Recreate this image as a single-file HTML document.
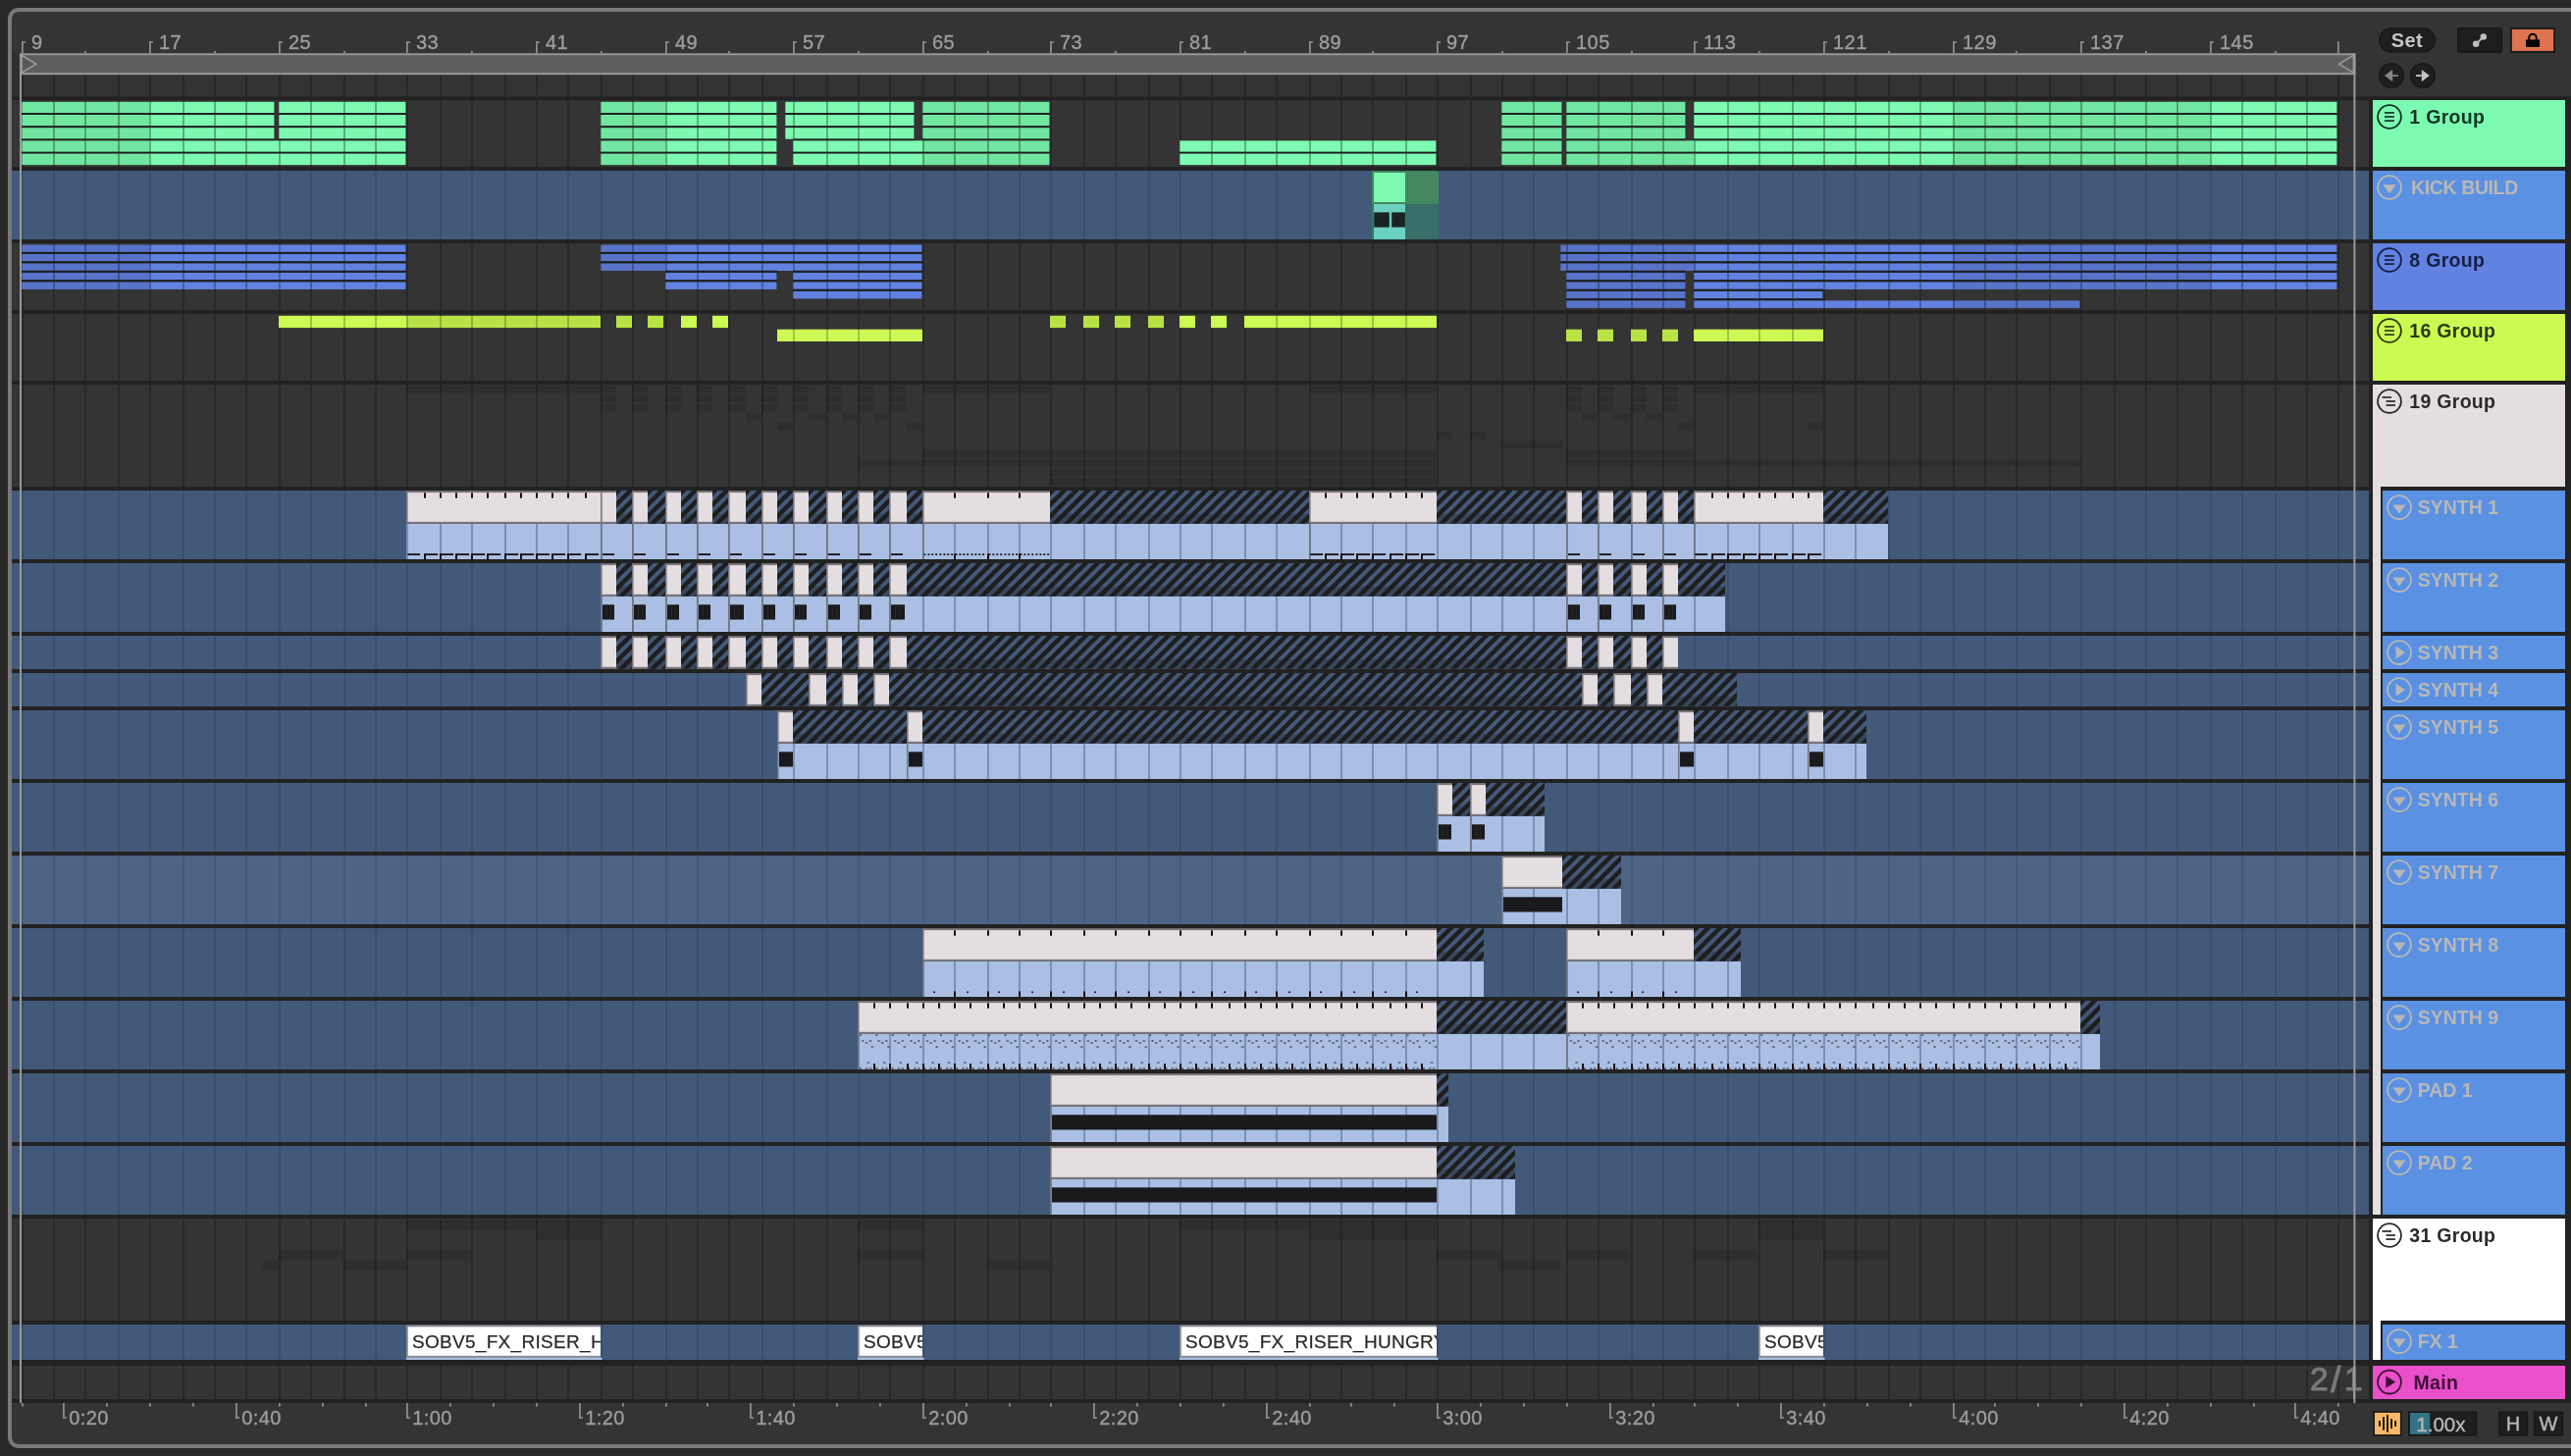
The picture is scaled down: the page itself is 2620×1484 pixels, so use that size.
<!DOCTYPE html><html><head><meta charset="utf-8"><title>Arrangement</title><style>

html,body{margin:0;padding:0;background:#282828;}
body{width:2620px;height:1484px;overflow:hidden;position:relative;font-family:"Liberation Sans",sans-serif;}
#panel{position:absolute;left:8px;top:8px;width:2640px;height:1468.1px;box-sizing:border-box;border:4.2px solid #797979;border-radius:11px;background:#343434;}
svg{position:absolute;left:0;top:0;}
#txt{position:absolute;left:0;top:0;width:2620px;height:1484px;will-change:transform;}
div.rl{position:absolute;font-size:20px;line-height:20px;color:#9d9d9d;white-space:nowrap;letter-spacing:0.45px;-webkit-text-stroke:0.35px #9d9d9d;}
div.th{position:absolute;font-size:19.5px;line-height:20px;font-weight:bold;white-space:nowrap;}
div.th{letter-spacing:0.3px;}
div.th.g{letter-spacing:0;}
div.th.k{letter-spacing:-0.38px;}
div.fx{position:absolute;height:30.7px;overflow:hidden;white-space:nowrap;font-size:19px;line-height:31.6px;color:#2b2b2b;box-sizing:border-box;padding-left:4.4px;letter-spacing:0.3px;-webkit-text-stroke:0.25px #2b2b2b;}
div.set{position:absolute;height:25.7px;line-height:27.3px;font-size:20px;font-weight:bold;color:#c6c6c6;text-align:center;letter-spacing:0.4px;}
div.bt{position:absolute;height:21px;line-height:21.5px;font-size:20px;color:#b8b8b8;text-align:center;box-sizing:border-box;-webkit-text-stroke:0.35px #b8b8b8;}
div.zoom{position:absolute;font-size:33.6px;line-height:34px;color:#787878;-webkit-text-stroke:1.05px #787878;white-space:nowrap;}

</style></head><body>
<div id="panel"></div>
<svg width="2620" height="1484" viewBox="0 0 2620 1484" shape-rendering="auto">
<defs>
<pattern id="g" patternUnits="userSpaceOnUse" x="0" y="0" width="2620" height="120"><rect x="22" y="0" width="2" height="120" fill="#000"/><rect x="54" y="0" width="2" height="120" fill="#000"/><rect x="86" y="0" width="2" height="120" fill="#000"/><rect x="120" y="0" width="2" height="120" fill="#000"/><rect x="152" y="0" width="2" height="120" fill="#000"/><rect x="186" y="0" width="2" height="120" fill="#000"/><rect x="218" y="0" width="2" height="120" fill="#000"/><rect x="250" y="0" width="2" height="120" fill="#000"/><rect x="284" y="0" width="2" height="120" fill="#000"/><rect x="316" y="0" width="2" height="120" fill="#000"/><rect x="350" y="0" width="2" height="120" fill="#000"/><rect x="382" y="0" width="2" height="120" fill="#000"/><rect x="414" y="0" width="2" height="120" fill="#000"/><rect x="448" y="0" width="2" height="120" fill="#000"/><rect x="480" y="0" width="2" height="120" fill="#000"/><rect x="514" y="0" width="2" height="120" fill="#000"/><rect x="546" y="0" width="2" height="120" fill="#000"/><rect x="578" y="0" width="2" height="120" fill="#000"/><rect x="612" y="0" width="2" height="120" fill="#000"/><rect x="644" y="0" width="2" height="120" fill="#000"/><rect x="678" y="0" width="2" height="120" fill="#000"/><rect x="710" y="0" width="2" height="120" fill="#000"/><rect x="742" y="0" width="2" height="120" fill="#000"/><rect x="776" y="0" width="2" height="120" fill="#000"/><rect x="808" y="0" width="2" height="120" fill="#000"/><rect x="842" y="0" width="2" height="120" fill="#000"/><rect x="874" y="0" width="2" height="120" fill="#000"/><rect x="906" y="0" width="2" height="120" fill="#000"/><rect x="940" y="0" width="2" height="120" fill="#000"/><rect x="972" y="0" width="2" height="120" fill="#000"/><rect x="1006" y="0" width="2" height="120" fill="#000"/><rect x="1038" y="0" width="2" height="120" fill="#000"/><rect x="1070" y="0" width="2" height="120" fill="#000"/><rect x="1104" y="0" width="2" height="120" fill="#000"/><rect x="1136" y="0" width="2" height="120" fill="#000"/><rect x="1170" y="0" width="2" height="120" fill="#000"/><rect x="1202" y="0" width="2" height="120" fill="#000"/><rect x="1234" y="0" width="2" height="120" fill="#000"/><rect x="1268" y="0" width="2" height="120" fill="#000"/><rect x="1300" y="0" width="2" height="120" fill="#000"/><rect x="1334" y="0" width="2" height="120" fill="#000"/><rect x="1366" y="0" width="2" height="120" fill="#000"/><rect x="1398" y="0" width="2" height="120" fill="#000"/><rect x="1432" y="0" width="2" height="120" fill="#000"/><rect x="1464" y="0" width="2" height="120" fill="#000"/><rect x="1498" y="0" width="2" height="120" fill="#000"/><rect x="1530" y="0" width="2" height="120" fill="#000"/><rect x="1562" y="0" width="2" height="120" fill="#000"/><rect x="1596" y="0" width="2" height="120" fill="#000"/><rect x="1628" y="0" width="2" height="120" fill="#000"/><rect x="1662" y="0" width="2" height="120" fill="#000"/><rect x="1694" y="0" width="2" height="120" fill="#000"/><rect x="1726" y="0" width="2" height="120" fill="#000"/><rect x="1760" y="0" width="2" height="120" fill="#000"/><rect x="1792" y="0" width="2" height="120" fill="#000"/><rect x="1826" y="0" width="2" height="120" fill="#000"/><rect x="1858" y="0" width="2" height="120" fill="#000"/><rect x="1890" y="0" width="2" height="120" fill="#000"/><rect x="1924" y="0" width="2" height="120" fill="#000"/><rect x="1956" y="0" width="2" height="120" fill="#000"/><rect x="1990" y="0" width="2" height="120" fill="#000"/><rect x="2022" y="0" width="2" height="120" fill="#000"/><rect x="2054" y="0" width="2" height="120" fill="#000"/><rect x="2088" y="0" width="2" height="120" fill="#000"/><rect x="2120" y="0" width="2" height="120" fill="#000"/><rect x="2154" y="0" width="2" height="120" fill="#000"/><rect x="2186" y="0" width="2" height="120" fill="#000"/><rect x="2218" y="0" width="2" height="120" fill="#000"/><rect x="2252" y="0" width="2" height="120" fill="#000"/><rect x="2284" y="0" width="2" height="120" fill="#000"/><rect x="2318" y="0" width="2" height="120" fill="#000"/><rect x="2350" y="0" width="2" height="120" fill="#000"/><rect x="2382" y="0" width="2" height="120" fill="#000"/></pattern>
<pattern id="gb" patternUnits="userSpaceOnUse" x="0" y="0" width="2620" height="120"><rect x="22" y="0" width="2" height="120" fill="#7b90b8"/><rect x="54" y="0" width="2" height="120" fill="#7b90b8"/><rect x="86" y="0" width="2" height="120" fill="#7b90b8"/><rect x="120" y="0" width="2" height="120" fill="#7b90b8"/><rect x="152" y="0" width="2" height="120" fill="#7b90b8"/><rect x="186" y="0" width="2" height="120" fill="#7b90b8"/><rect x="218" y="0" width="2" height="120" fill="#7b90b8"/><rect x="250" y="0" width="2" height="120" fill="#7b90b8"/><rect x="284" y="0" width="2" height="120" fill="#7b90b8"/><rect x="316" y="0" width="2" height="120" fill="#7b90b8"/><rect x="350" y="0" width="2" height="120" fill="#7b90b8"/><rect x="382" y="0" width="2" height="120" fill="#7b90b8"/><rect x="414" y="0" width="2" height="120" fill="#7b90b8"/><rect x="448" y="0" width="2" height="120" fill="#7b90b8"/><rect x="480" y="0" width="2" height="120" fill="#7b90b8"/><rect x="514" y="0" width="2" height="120" fill="#7b90b8"/><rect x="546" y="0" width="2" height="120" fill="#7b90b8"/><rect x="578" y="0" width="2" height="120" fill="#7b90b8"/><rect x="612" y="0" width="2" height="120" fill="#7b90b8"/><rect x="644" y="0" width="2" height="120" fill="#7b90b8"/><rect x="678" y="0" width="2" height="120" fill="#7b90b8"/><rect x="710" y="0" width="2" height="120" fill="#7b90b8"/><rect x="742" y="0" width="2" height="120" fill="#7b90b8"/><rect x="776" y="0" width="2" height="120" fill="#7b90b8"/><rect x="808" y="0" width="2" height="120" fill="#7b90b8"/><rect x="842" y="0" width="2" height="120" fill="#7b90b8"/><rect x="874" y="0" width="2" height="120" fill="#7b90b8"/><rect x="906" y="0" width="2" height="120" fill="#7b90b8"/><rect x="940" y="0" width="2" height="120" fill="#7b90b8"/><rect x="972" y="0" width="2" height="120" fill="#7b90b8"/><rect x="1006" y="0" width="2" height="120" fill="#7b90b8"/><rect x="1038" y="0" width="2" height="120" fill="#7b90b8"/><rect x="1070" y="0" width="2" height="120" fill="#7b90b8"/><rect x="1104" y="0" width="2" height="120" fill="#7b90b8"/><rect x="1136" y="0" width="2" height="120" fill="#7b90b8"/><rect x="1170" y="0" width="2" height="120" fill="#7b90b8"/><rect x="1202" y="0" width="2" height="120" fill="#7b90b8"/><rect x="1234" y="0" width="2" height="120" fill="#7b90b8"/><rect x="1268" y="0" width="2" height="120" fill="#7b90b8"/><rect x="1300" y="0" width="2" height="120" fill="#7b90b8"/><rect x="1334" y="0" width="2" height="120" fill="#7b90b8"/><rect x="1366" y="0" width="2" height="120" fill="#7b90b8"/><rect x="1398" y="0" width="2" height="120" fill="#7b90b8"/><rect x="1432" y="0" width="2" height="120" fill="#7b90b8"/><rect x="1464" y="0" width="2" height="120" fill="#7b90b8"/><rect x="1498" y="0" width="2" height="120" fill="#7b90b8"/><rect x="1530" y="0" width="2" height="120" fill="#7b90b8"/><rect x="1562" y="0" width="2" height="120" fill="#7b90b8"/><rect x="1596" y="0" width="2" height="120" fill="#7b90b8"/><rect x="1628" y="0" width="2" height="120" fill="#7b90b8"/><rect x="1662" y="0" width="2" height="120" fill="#7b90b8"/><rect x="1694" y="0" width="2" height="120" fill="#7b90b8"/><rect x="1726" y="0" width="2" height="120" fill="#7b90b8"/><rect x="1760" y="0" width="2" height="120" fill="#7b90b8"/><rect x="1792" y="0" width="2" height="120" fill="#7b90b8"/><rect x="1826" y="0" width="2" height="120" fill="#7b90b8"/><rect x="1858" y="0" width="2" height="120" fill="#7b90b8"/><rect x="1890" y="0" width="2" height="120" fill="#7b90b8"/><rect x="1924" y="0" width="2" height="120" fill="#7b90b8"/><rect x="1956" y="0" width="2" height="120" fill="#7b90b8"/><rect x="1990" y="0" width="2" height="120" fill="#7b90b8"/><rect x="2022" y="0" width="2" height="120" fill="#7b90b8"/><rect x="2054" y="0" width="2" height="120" fill="#7b90b8"/><rect x="2088" y="0" width="2" height="120" fill="#7b90b8"/><rect x="2120" y="0" width="2" height="120" fill="#7b90b8"/><rect x="2154" y="0" width="2" height="120" fill="#7b90b8"/><rect x="2186" y="0" width="2" height="120" fill="#7b90b8"/><rect x="2218" y="0" width="2" height="120" fill="#7b90b8"/><rect x="2252" y="0" width="2" height="120" fill="#7b90b8"/><rect x="2284" y="0" width="2" height="120" fill="#7b90b8"/><rect x="2318" y="0" width="2" height="120" fill="#7b90b8"/><rect x="2350" y="0" width="2" height="120" fill="#7b90b8"/><rect x="2382" y="0" width="2" height="120" fill="#7b90b8"/></pattern>
<pattern id="h" patternUnits="userSpaceOnUse" x="0" y="0" width="12" height="12"><rect width="12" height="12" fill="#1e1e1e"/><path d="M-0.5 -3L-18.5 15M11.5 -3L-6.5 15M23.5 -3L5.5 15" stroke="#44597a" stroke-width="4.05" fill="none"/></pattern>
<pattern id="sp" patternUnits="userSpaceOnUse" x="22.2" y="1054" width="16.4" height="74"><rect x="0.9" y="0.1" width="2" height="2" fill="#59616f"/><rect x="3.3" y="6" width="2" height="2" fill="#59616f"/><rect x="11" y="6" width="2" height="2" fill="#59616f"/><rect x="7" y="8" width="2" height="2" fill="#59616f"/><rect x="13" y="12" width="2" height="2" fill="#59616f"/><rect x="9" y="28" width="2" height="2" fill="#59616f"/><rect x="0.9" y="34" width="2" height="2" fill="#59616f"/><rect x="7.1" y="34" width="2" height="2" fill="#59616f"/><rect x="11.1" y="34" width="2" height="2" fill="#59616f"/></pattern>
</defs>
<rect x="12" y="98.3" width="2402" height="1331.7" fill="#222222"/>
<rect x="2414" y="98.3" width="206" height="1331.7" fill="#222222"/>
<rect x="12" y="54.3" width="8" height="44" fill="#2f2f2f"/>
<rect x="20" y="76" width="2394" height="22.3" fill="#333333"/>
<rect x="22" y="76" width="2370" height="22.3" fill="url(#g)" opacity="0.23"/>
<rect x="12" y="102" width="2402" height="68" fill="#343434"/>
<rect x="22" y="102" width="2370" height="68" fill="url(#g)" opacity="0.23"/>
<rect x="12" y="174" width="2402" height="70" fill="#43597a"/>
<rect x="22" y="174" width="2370" height="70" fill="url(#g)" opacity="0.115"/>
<rect x="12" y="248" width="2402" height="68" fill="#343434"/>
<rect x="22" y="248" width="2370" height="68" fill="url(#g)" opacity="0.23"/>
<rect x="12" y="320" width="2402" height="68" fill="#343434"/>
<rect x="22" y="320" width="2370" height="68" fill="url(#g)" opacity="0.23"/>
<rect x="12" y="392" width="2402" height="104" fill="#343434"/>
<rect x="22" y="392" width="2370" height="104" fill="url(#g)" opacity="0.23"/>
<rect x="12" y="500" width="2402" height="70" fill="#43597a"/>
<rect x="22" y="500" width="2370" height="70" fill="url(#g)" opacity="0.115"/>
<rect x="12" y="574" width="2402" height="70" fill="#43597a"/>
<rect x="22" y="574" width="2370" height="70" fill="url(#g)" opacity="0.115"/>
<rect x="12" y="648" width="2402" height="34" fill="#43597a"/>
<rect x="22" y="648" width="2370" height="34" fill="url(#g)" opacity="0.115"/>
<rect x="12" y="686" width="2402" height="34" fill="#43597a"/>
<rect x="22" y="686" width="2370" height="34" fill="url(#g)" opacity="0.115"/>
<rect x="12" y="724" width="2402" height="70" fill="#43597a"/>
<rect x="22" y="724" width="2370" height="70" fill="url(#g)" opacity="0.115"/>
<rect x="12" y="798" width="2402" height="70" fill="#43597a"/>
<rect x="22" y="798" width="2370" height="70" fill="url(#g)" opacity="0.115"/>
<rect x="12" y="872" width="2402" height="70" fill="#4e6485"/>
<rect x="22" y="872" width="2370" height="70" fill="url(#g)" opacity="0.115"/>
<rect x="12" y="946" width="2402" height="70" fill="#43597a"/>
<rect x="22" y="946" width="2370" height="70" fill="url(#g)" opacity="0.115"/>
<rect x="12" y="1020" width="2402" height="70" fill="#43597a"/>
<rect x="22" y="1020" width="2370" height="70" fill="url(#g)" opacity="0.115"/>
<rect x="12" y="1094" width="2402" height="70" fill="#43597a"/>
<rect x="22" y="1094" width="2370" height="70" fill="url(#g)" opacity="0.115"/>
<rect x="12" y="1168" width="2402" height="70" fill="#43597a"/>
<rect x="22" y="1168" width="2370" height="70" fill="url(#g)" opacity="0.115"/>
<rect x="12" y="1242" width="2402" height="104" fill="#343434"/>
<rect x="22" y="1242" width="2370" height="104" fill="url(#g)" opacity="0.23"/>
<rect x="12" y="1350" width="2402" height="36" fill="#43597a"/>
<rect x="22" y="1350" width="2370" height="36" fill="url(#g)" opacity="0.115"/>
<rect x="12" y="1392" width="2402" height="34" fill="#343434"/>
<rect x="22" y="1392" width="2370" height="34" fill="url(#g)" opacity="0.23"/>
<rect x="22.3" y="115" width="129.7" height="2.2" fill="#1d1f1e"/>
<rect x="22.3" y="103.8" width="129.7" height="11.5" fill="#71e5a2"/>
<rect x="152" y="115" width="127.4" height="2.2" fill="#1d1f1e"/>
<rect x="152" y="103.8" width="127.4" height="11.5" fill="#7dfab2"/>
<rect x="24" y="103.8" width="256" height="11.5" fill="url(#g)" opacity="0.3"/>
<rect x="22.3" y="128.2" width="129.7" height="2.2" fill="#1d1f1e"/>
<rect x="22.3" y="115.1" width="129.7" height="2.1" fill="#1d1f1e"/>
<rect x="22.3" y="117" width="129.7" height="11.5" fill="#71e5a2"/>
<rect x="152" y="128.2" width="127.4" height="2.2" fill="#1d1f1e"/>
<rect x="152" y="115.1" width="127.4" height="2.1" fill="#1d1f1e"/>
<rect x="152" y="117" width="127.4" height="11.5" fill="#7dfab2"/>
<rect x="24" y="117" width="256" height="11.5" fill="url(#g)" opacity="0.3"/>
<rect x="22.3" y="141.4" width="129.7" height="2.2" fill="#1d1f1e"/>
<rect x="22.3" y="128.3" width="129.7" height="2.1" fill="#1d1f1e"/>
<rect x="22.3" y="130.2" width="129.7" height="11.5" fill="#71e5a2"/>
<rect x="152" y="141.4" width="127.4" height="2.2" fill="#1d1f1e"/>
<rect x="152" y="128.3" width="127.4" height="2.1" fill="#1d1f1e"/>
<rect x="152" y="130.2" width="127.4" height="11.5" fill="#7dfab2"/>
<rect x="24" y="130.2" width="256" height="11.5" fill="url(#g)" opacity="0.3"/>
<rect x="284.3" y="115" width="129.1" height="2.2" fill="#1d1f1e"/>
<rect x="284.3" y="103.8" width="129.1" height="11.5" fill="#7dfab2"/>
<rect x="286" y="103.8" width="128" height="11.5" fill="url(#g)" opacity="0.3"/>
<rect x="284.3" y="128.2" width="129.1" height="2.2" fill="#1d1f1e"/>
<rect x="284.3" y="115.1" width="129.1" height="2.1" fill="#1d1f1e"/>
<rect x="284.3" y="117" width="129.1" height="11.5" fill="#7dfab2"/>
<rect x="286" y="117" width="128" height="11.5" fill="url(#g)" opacity="0.3"/>
<rect x="284.3" y="141.4" width="129.1" height="2.2" fill="#1d1f1e"/>
<rect x="284.3" y="128.3" width="129.1" height="2.1" fill="#1d1f1e"/>
<rect x="284.3" y="130.2" width="129.1" height="11.5" fill="#7dfab2"/>
<rect x="286" y="130.2" width="128" height="11.5" fill="url(#g)" opacity="0.3"/>
<rect x="22.3" y="154.6" width="129.7" height="2.2" fill="#1d1f1e"/>
<rect x="22.3" y="141.5" width="129.7" height="2.1" fill="#1d1f1e"/>
<rect x="22.3" y="143.4" width="129.7" height="11.5" fill="#71e5a2"/>
<rect x="152" y="154.6" width="261.4" height="2.2" fill="#1d1f1e"/>
<rect x="152" y="141.5" width="128" height="2.1" fill="#1d1f1e"/>
<rect x="284" y="141.5" width="129.4" height="2.1" fill="#1d1f1e"/>
<rect x="152" y="143.4" width="261.4" height="11.5" fill="#7dfab2"/>
<rect x="24" y="143.4" width="390" height="11.5" fill="url(#g)" opacity="0.3"/>
<rect x="22.3" y="154.7" width="129.7" height="2.1" fill="#1d1f1e"/>
<rect x="22.3" y="156.6" width="129.7" height="11.5" fill="#71e5a2"/>
<rect x="152" y="154.7" width="261.4" height="2.1" fill="#1d1f1e"/>
<rect x="152" y="156.6" width="261.4" height="11.5" fill="#7dfab2"/>
<rect x="24" y="156.6" width="390" height="11.5" fill="url(#g)" opacity="0.3"/>
<rect x="612.3" y="115" width="65.7" height="2.2" fill="#1d1f1e"/>
<rect x="612.3" y="103.8" width="65.7" height="11.5" fill="#71e5a2"/>
<rect x="678" y="115" width="113.4" height="2.2" fill="#1d1f1e"/>
<rect x="678" y="103.8" width="113.4" height="11.5" fill="#7dfab2"/>
<rect x="614" y="103.8" width="178" height="11.5" fill="url(#g)" opacity="0.3"/>
<rect x="612.3" y="128.2" width="65.7" height="2.2" fill="#1d1f1e"/>
<rect x="612.3" y="115.1" width="65.7" height="2.1" fill="#1d1f1e"/>
<rect x="612.3" y="117" width="65.7" height="11.5" fill="#71e5a2"/>
<rect x="678" y="128.2" width="113.4" height="2.2" fill="#1d1f1e"/>
<rect x="678" y="115.1" width="113.4" height="2.1" fill="#1d1f1e"/>
<rect x="678" y="117" width="113.4" height="11.5" fill="#7dfab2"/>
<rect x="614" y="117" width="178" height="11.5" fill="url(#g)" opacity="0.3"/>
<rect x="612.3" y="141.4" width="65.7" height="2.2" fill="#1d1f1e"/>
<rect x="612.3" y="128.3" width="65.7" height="2.1" fill="#1d1f1e"/>
<rect x="612.3" y="130.2" width="65.7" height="11.5" fill="#71e5a2"/>
<rect x="678" y="141.4" width="113.4" height="2.2" fill="#1d1f1e"/>
<rect x="678" y="128.3" width="113.4" height="2.1" fill="#1d1f1e"/>
<rect x="678" y="130.2" width="113.4" height="11.5" fill="#7dfab2"/>
<rect x="614" y="130.2" width="178" height="11.5" fill="url(#g)" opacity="0.3"/>
<rect x="612.3" y="154.6" width="65.7" height="2.2" fill="#1d1f1e"/>
<rect x="612.3" y="141.5" width="65.7" height="2.1" fill="#1d1f1e"/>
<rect x="612.3" y="143.4" width="65.7" height="11.5" fill="#71e5a2"/>
<rect x="678" y="154.6" width="113.4" height="2.2" fill="#1d1f1e"/>
<rect x="678" y="141.5" width="113.4" height="2.1" fill="#1d1f1e"/>
<rect x="678" y="143.4" width="113.4" height="11.5" fill="#7dfab2"/>
<rect x="614" y="143.4" width="178" height="11.5" fill="url(#g)" opacity="0.3"/>
<rect x="612.3" y="154.7" width="65.7" height="2.1" fill="#1d1f1e"/>
<rect x="612.3" y="156.6" width="65.7" height="11.5" fill="#71e5a2"/>
<rect x="678" y="154.7" width="113.4" height="2.1" fill="#1d1f1e"/>
<rect x="678" y="156.6" width="113.4" height="11.5" fill="#7dfab2"/>
<rect x="614" y="156.6" width="178" height="11.5" fill="url(#g)" opacity="0.3"/>
<rect x="800.3" y="115" width="131.1" height="2.2" fill="#1d1f1e"/>
<rect x="800.3" y="103.8" width="131.1" height="11.5" fill="#7dfab2"/>
<rect x="804" y="103.8" width="128" height="11.5" fill="url(#g)" opacity="0.3"/>
<rect x="800.3" y="128.2" width="131.1" height="2.2" fill="#1d1f1e"/>
<rect x="800.3" y="115.1" width="131.1" height="2.1" fill="#1d1f1e"/>
<rect x="800.3" y="117" width="131.1" height="11.5" fill="#7dfab2"/>
<rect x="804" y="117" width="128" height="11.5" fill="url(#g)" opacity="0.3"/>
<rect x="808" y="141.4" width="123.4" height="2.2" fill="#1d1f1e"/>
<rect x="800.3" y="128.3" width="131.1" height="2.1" fill="#1d1f1e"/>
<rect x="800.3" y="130.2" width="131.1" height="11.5" fill="#7dfab2"/>
<rect x="804" y="130.2" width="128" height="11.5" fill="url(#g)" opacity="0.3"/>
<rect x="940.3" y="115" width="129.1" height="2.2" fill="#1d1f1e"/>
<rect x="940.3" y="103.8" width="129.1" height="11.5" fill="#71e5a2"/>
<rect x="942" y="103.8" width="128" height="11.5" fill="url(#g)" opacity="0.3"/>
<rect x="940.3" y="128.2" width="129.1" height="2.2" fill="#1d1f1e"/>
<rect x="940.3" y="115.1" width="129.1" height="2.1" fill="#1d1f1e"/>
<rect x="940.3" y="117" width="129.1" height="11.5" fill="#71e5a2"/>
<rect x="942" y="117" width="128" height="11.5" fill="url(#g)" opacity="0.3"/>
<rect x="940.3" y="141.4" width="129.1" height="2.2" fill="#1d1f1e"/>
<rect x="940.3" y="128.3" width="129.1" height="2.1" fill="#1d1f1e"/>
<rect x="940.3" y="130.2" width="129.1" height="11.5" fill="#71e5a2"/>
<rect x="942" y="130.2" width="128" height="11.5" fill="url(#g)" opacity="0.3"/>
<rect x="808.3" y="154.6" width="131.7" height="2.2" fill="#1d1f1e"/>
<rect x="808.3" y="141.5" width="123.7" height="2.1" fill="#1d1f1e"/>
<rect x="808.3" y="143.4" width="131.7" height="11.5" fill="#7dfab2"/>
<rect x="940" y="154.6" width="129.4" height="2.2" fill="#1d1f1e"/>
<rect x="940" y="141.5" width="129.4" height="2.1" fill="#1d1f1e"/>
<rect x="940" y="143.4" width="129.4" height="11.5" fill="#71e5a2"/>
<rect x="812" y="143.4" width="258" height="11.5" fill="url(#g)" opacity="0.3"/>
<rect x="808.3" y="154.7" width="131.7" height="2.1" fill="#1d1f1e"/>
<rect x="808.3" y="156.6" width="131.7" height="11.5" fill="#7dfab2"/>
<rect x="940" y="154.7" width="129.4" height="2.1" fill="#1d1f1e"/>
<rect x="940" y="156.6" width="129.4" height="11.5" fill="#71e5a2"/>
<rect x="812" y="156.6" width="258" height="11.5" fill="url(#g)" opacity="0.3"/>
<rect x="1202.3" y="154.6" width="261.1" height="2.2" fill="#1d1f1e"/>
<rect x="1202.3" y="143.4" width="261.1" height="11.5" fill="#7dfab2"/>
<rect x="1206" y="143.4" width="258" height="11.5" fill="url(#g)" opacity="0.3"/>
<rect x="1202.3" y="154.7" width="261.1" height="2.1" fill="#1d1f1e"/>
<rect x="1202.3" y="156.6" width="261.1" height="11.5" fill="#7dfab2"/>
<rect x="1206" y="156.6" width="258" height="11.5" fill="url(#g)" opacity="0.3"/>
<rect x="1530.3" y="115" width="61.1" height="2.2" fill="#1d1f1e"/>
<rect x="1530.3" y="103.8" width="61.1" height="11.5" fill="#71e5a2"/>
<rect x="1534" y="103.8" width="58" height="11.5" fill="url(#g)" opacity="0.3"/>
<rect x="1530.3" y="128.2" width="61.1" height="2.2" fill="#1d1f1e"/>
<rect x="1530.3" y="115.1" width="61.1" height="2.1" fill="#1d1f1e"/>
<rect x="1530.3" y="117" width="61.1" height="11.5" fill="#71e5a2"/>
<rect x="1534" y="117" width="58" height="11.5" fill="url(#g)" opacity="0.3"/>
<rect x="1530.3" y="141.4" width="61.1" height="2.2" fill="#1d1f1e"/>
<rect x="1530.3" y="128.3" width="61.1" height="2.1" fill="#1d1f1e"/>
<rect x="1530.3" y="130.2" width="61.1" height="11.5" fill="#71e5a2"/>
<rect x="1534" y="130.2" width="58" height="11.5" fill="url(#g)" opacity="0.3"/>
<rect x="1530.3" y="154.6" width="61.1" height="2.2" fill="#1d1f1e"/>
<rect x="1530.3" y="141.5" width="61.1" height="2.1" fill="#1d1f1e"/>
<rect x="1530.3" y="143.4" width="61.1" height="11.5" fill="#71e5a2"/>
<rect x="1534" y="143.4" width="58" height="11.5" fill="url(#g)" opacity="0.3"/>
<rect x="1530.3" y="154.7" width="61.1" height="2.1" fill="#1d1f1e"/>
<rect x="1530.3" y="156.6" width="61.1" height="11.5" fill="#71e5a2"/>
<rect x="1534" y="156.6" width="58" height="11.5" fill="url(#g)" opacity="0.3"/>
<rect x="1596.3" y="115" width="121.1" height="2.2" fill="#1d1f1e"/>
<rect x="1596.3" y="103.8" width="121.1" height="11.5" fill="#71e5a2"/>
<rect x="1598" y="103.8" width="120" height="11.5" fill="url(#g)" opacity="0.3"/>
<rect x="1596.3" y="128.2" width="121.1" height="2.2" fill="#1d1f1e"/>
<rect x="1596.3" y="115.1" width="121.1" height="2.1" fill="#1d1f1e"/>
<rect x="1596.3" y="117" width="121.1" height="11.5" fill="#71e5a2"/>
<rect x="1598" y="117" width="120" height="11.5" fill="url(#g)" opacity="0.3"/>
<rect x="1596.3" y="141.4" width="121.1" height="2.2" fill="#1d1f1e"/>
<rect x="1596.3" y="128.3" width="121.1" height="2.1" fill="#1d1f1e"/>
<rect x="1596.3" y="130.2" width="121.1" height="11.5" fill="#71e5a2"/>
<rect x="1598" y="130.2" width="120" height="11.5" fill="url(#g)" opacity="0.3"/>
<rect x="1726.3" y="115" width="263.7" height="2.2" fill="#1d1f1e"/>
<rect x="1726.3" y="103.8" width="263.7" height="11.5" fill="#7dfab2"/>
<rect x="1990" y="115" width="262" height="2.2" fill="#1d1f1e"/>
<rect x="1990" y="103.8" width="262" height="11.5" fill="#71e5a2"/>
<rect x="2252" y="115" width="129.4" height="2.2" fill="#1d1f1e"/>
<rect x="2252" y="103.8" width="129.4" height="11.5" fill="#7dfab2"/>
<rect x="1730" y="103.8" width="652" height="11.5" fill="url(#g)" opacity="0.3"/>
<rect x="1726.3" y="128.2" width="263.7" height="2.2" fill="#1d1f1e"/>
<rect x="1726.3" y="115.1" width="263.7" height="2.1" fill="#1d1f1e"/>
<rect x="1726.3" y="117" width="263.7" height="11.5" fill="#7dfab2"/>
<rect x="1990" y="128.2" width="262" height="2.2" fill="#1d1f1e"/>
<rect x="1990" y="115.1" width="262" height="2.1" fill="#1d1f1e"/>
<rect x="1990" y="117" width="262" height="11.5" fill="#71e5a2"/>
<rect x="2252" y="128.2" width="129.4" height="2.2" fill="#1d1f1e"/>
<rect x="2252" y="115.1" width="129.4" height="2.1" fill="#1d1f1e"/>
<rect x="2252" y="117" width="129.4" height="11.5" fill="#7dfab2"/>
<rect x="1730" y="117" width="652" height="11.5" fill="url(#g)" opacity="0.3"/>
<rect x="1726.3" y="141.4" width="263.7" height="2.2" fill="#1d1f1e"/>
<rect x="1726.3" y="128.3" width="263.7" height="2.1" fill="#1d1f1e"/>
<rect x="1726.3" y="130.2" width="263.7" height="11.5" fill="#7dfab2"/>
<rect x="1990" y="141.4" width="262" height="2.2" fill="#1d1f1e"/>
<rect x="1990" y="128.3" width="262" height="2.1" fill="#1d1f1e"/>
<rect x="1990" y="130.2" width="262" height="11.5" fill="#71e5a2"/>
<rect x="2252" y="141.4" width="129.4" height="2.2" fill="#1d1f1e"/>
<rect x="2252" y="128.3" width="129.4" height="2.1" fill="#1d1f1e"/>
<rect x="2252" y="130.2" width="129.4" height="11.5" fill="#7dfab2"/>
<rect x="1730" y="130.2" width="652" height="11.5" fill="url(#g)" opacity="0.3"/>
<rect x="1596.3" y="154.6" width="129.7" height="2.2" fill="#1d1f1e"/>
<rect x="1596.3" y="141.5" width="121.7" height="2.1" fill="#1d1f1e"/>
<rect x="1596.3" y="143.4" width="129.7" height="11.5" fill="#71e5a2"/>
<rect x="1726" y="154.6" width="264" height="2.2" fill="#1d1f1e"/>
<rect x="1726" y="141.5" width="264" height="2.1" fill="#1d1f1e"/>
<rect x="1726" y="143.4" width="264" height="11.5" fill="#7dfab2"/>
<rect x="1990" y="154.6" width="262" height="2.2" fill="#1d1f1e"/>
<rect x="1990" y="141.5" width="262" height="2.1" fill="#1d1f1e"/>
<rect x="1990" y="143.4" width="262" height="11.5" fill="#71e5a2"/>
<rect x="2252" y="154.6" width="129.4" height="2.2" fill="#1d1f1e"/>
<rect x="2252" y="141.5" width="129.4" height="2.1" fill="#1d1f1e"/>
<rect x="2252" y="143.4" width="129.4" height="11.5" fill="#7dfab2"/>
<rect x="1598" y="143.4" width="784" height="11.5" fill="url(#g)" opacity="0.3"/>
<rect x="1596.3" y="154.7" width="129.7" height="2.1" fill="#1d1f1e"/>
<rect x="1596.3" y="156.6" width="129.7" height="11.5" fill="#71e5a2"/>
<rect x="1726" y="154.7" width="264" height="2.1" fill="#1d1f1e"/>
<rect x="1726" y="156.6" width="264" height="11.5" fill="#7dfab2"/>
<rect x="1990" y="154.7" width="262" height="2.1" fill="#1d1f1e"/>
<rect x="1990" y="156.6" width="262" height="11.5" fill="#71e5a2"/>
<rect x="2252" y="154.7" width="129.4" height="2.1" fill="#1d1f1e"/>
<rect x="2252" y="156.6" width="129.4" height="11.5" fill="#7dfab2"/>
<rect x="1598" y="156.6" width="784" height="11.5" fill="url(#g)" opacity="0.3"/>
<rect x="22.3" y="256.7" width="129.7" height="2.48" fill="#1d1f1e"/>
<rect x="22.3" y="249.5" width="129.7" height="7.5" fill="#5873c9"/>
<rect x="152" y="256.7" width="261.4" height="2.48" fill="#1d1f1e"/>
<rect x="152" y="249.5" width="261.4" height="7.5" fill="#6182e1"/>
<rect x="24" y="249.5" width="390" height="7.5" fill="url(#g)" opacity="0.28"/>
<rect x="22.3" y="266.18" width="129.7" height="2.48" fill="#1d1f1e"/>
<rect x="22.3" y="256.8" width="129.7" height="2.38" fill="#1d1f1e"/>
<rect x="22.3" y="258.98" width="129.7" height="7.5" fill="#5873c9"/>
<rect x="152" y="266.18" width="261.4" height="2.48" fill="#1d1f1e"/>
<rect x="152" y="256.8" width="261.4" height="2.38" fill="#1d1f1e"/>
<rect x="152" y="258.98" width="261.4" height="7.5" fill="#6182e1"/>
<rect x="24" y="258.98" width="390" height="7.5" fill="url(#g)" opacity="0.28"/>
<rect x="22.3" y="275.66" width="129.7" height="2.48" fill="#1d1f1e"/>
<rect x="22.3" y="266.28" width="129.7" height="2.38" fill="#1d1f1e"/>
<rect x="22.3" y="268.46" width="129.7" height="7.5" fill="#5873c9"/>
<rect x="152" y="275.66" width="261.4" height="2.48" fill="#1d1f1e"/>
<rect x="152" y="266.28" width="261.4" height="2.38" fill="#1d1f1e"/>
<rect x="152" y="268.46" width="261.4" height="7.5" fill="#6182e1"/>
<rect x="24" y="268.46" width="390" height="7.5" fill="url(#g)" opacity="0.28"/>
<rect x="22.3" y="285.14" width="129.7" height="2.48" fill="#1d1f1e"/>
<rect x="22.3" y="275.76" width="129.7" height="2.38" fill="#1d1f1e"/>
<rect x="22.3" y="277.94" width="129.7" height="7.5" fill="#5873c9"/>
<rect x="152" y="285.14" width="261.4" height="2.48" fill="#1d1f1e"/>
<rect x="152" y="275.76" width="261.4" height="2.38" fill="#1d1f1e"/>
<rect x="152" y="277.94" width="261.4" height="7.5" fill="#6182e1"/>
<rect x="24" y="277.94" width="390" height="7.5" fill="url(#g)" opacity="0.28"/>
<rect x="22.3" y="285.24" width="129.7" height="2.38" fill="#1d1f1e"/>
<rect x="22.3" y="287.42" width="129.7" height="7.5" fill="#5873c9"/>
<rect x="152" y="285.24" width="261.4" height="2.38" fill="#1d1f1e"/>
<rect x="152" y="287.42" width="261.4" height="7.5" fill="#6182e1"/>
<rect x="24" y="287.42" width="390" height="7.5" fill="url(#g)" opacity="0.28"/>
<rect x="612.3" y="256.7" width="65.7" height="2.48" fill="#1d1f1e"/>
<rect x="612.3" y="249.5" width="65.7" height="7.5" fill="#5873c9"/>
<rect x="678" y="256.7" width="261.4" height="2.48" fill="#1d1f1e"/>
<rect x="678" y="249.5" width="261.4" height="7.5" fill="#6182e1"/>
<rect x="614" y="249.5" width="326" height="7.5" fill="url(#g)" opacity="0.28"/>
<rect x="612.3" y="266.18" width="65.7" height="2.48" fill="#1d1f1e"/>
<rect x="612.3" y="256.8" width="65.7" height="2.38" fill="#1d1f1e"/>
<rect x="612.3" y="258.98" width="65.7" height="7.5" fill="#5873c9"/>
<rect x="678" y="266.18" width="261.4" height="2.48" fill="#1d1f1e"/>
<rect x="678" y="256.8" width="261.4" height="2.38" fill="#1d1f1e"/>
<rect x="678" y="258.98" width="261.4" height="7.5" fill="#6182e1"/>
<rect x="614" y="258.98" width="326" height="7.5" fill="url(#g)" opacity="0.28"/>
<rect x="612.3" y="266.28" width="65.7" height="2.38" fill="#1d1f1e"/>
<rect x="612.3" y="268.46" width="65.7" height="7.5" fill="#5873c9"/>
<rect x="678" y="275.66" width="114" height="2.48" fill="#1d1f1e"/>
<rect x="808" y="275.66" width="131.4" height="2.48" fill="#1d1f1e"/>
<rect x="678" y="266.28" width="261.4" height="2.38" fill="#1d1f1e"/>
<rect x="678" y="268.46" width="261.4" height="7.5" fill="#6182e1"/>
<rect x="614" y="268.46" width="326" height="7.5" fill="url(#g)" opacity="0.28"/>
<rect x="678.3" y="285.14" width="113.1" height="2.48" fill="#1d1f1e"/>
<rect x="678.3" y="275.76" width="113.1" height="2.38" fill="#1d1f1e"/>
<rect x="678.3" y="277.94" width="113.1" height="7.5" fill="#6182e1"/>
<rect x="680" y="277.94" width="112" height="7.5" fill="url(#g)" opacity="0.28"/>
<rect x="678.3" y="285.24" width="113.1" height="2.38" fill="#1d1f1e"/>
<rect x="678.3" y="287.42" width="113.1" height="7.5" fill="#6182e1"/>
<rect x="680" y="287.42" width="112" height="7.5" fill="url(#g)" opacity="0.28"/>
<rect x="808.3" y="285.14" width="131.1" height="2.48" fill="#1d1f1e"/>
<rect x="808.3" y="275.76" width="131.1" height="2.38" fill="#1d1f1e"/>
<rect x="808.3" y="277.94" width="131.1" height="7.5" fill="#6182e1"/>
<rect x="812" y="277.94" width="128" height="7.5" fill="url(#g)" opacity="0.28"/>
<rect x="808.3" y="294.62" width="131.1" height="2.48" fill="#1d1f1e"/>
<rect x="808.3" y="285.24" width="131.1" height="2.38" fill="#1d1f1e"/>
<rect x="808.3" y="287.42" width="131.1" height="7.5" fill="#6182e1"/>
<rect x="812" y="287.42" width="128" height="7.5" fill="url(#g)" opacity="0.28"/>
<rect x="808.3" y="294.72" width="131.1" height="2.38" fill="#1d1f1e"/>
<rect x="808.3" y="296.9" width="131.1" height="7.5" fill="#6182e1"/>
<rect x="812" y="296.9" width="128" height="7.5" fill="url(#g)" opacity="0.28"/>
<rect x="1590.3" y="256.7" width="135.7" height="2.48" fill="#1d1f1e"/>
<rect x="1590.3" y="249.5" width="135.7" height="7.5" fill="#5873c9"/>
<rect x="1726" y="256.7" width="264" height="2.48" fill="#1d1f1e"/>
<rect x="1726" y="249.5" width="264" height="7.5" fill="#6182e1"/>
<rect x="1990" y="256.7" width="262" height="2.48" fill="#1d1f1e"/>
<rect x="1990" y="249.5" width="262" height="7.5" fill="#5873c9"/>
<rect x="2252" y="256.7" width="129.4" height="2.48" fill="#1d1f1e"/>
<rect x="2252" y="249.5" width="129.4" height="7.5" fill="#6182e1"/>
<rect x="1594" y="249.5" width="788" height="7.5" fill="url(#g)" opacity="0.28"/>
<rect x="1590.3" y="266.18" width="135.7" height="2.48" fill="#1d1f1e"/>
<rect x="1590.3" y="256.8" width="135.7" height="2.38" fill="#1d1f1e"/>
<rect x="1590.3" y="258.98" width="135.7" height="7.5" fill="#5873c9"/>
<rect x="1726" y="266.18" width="264" height="2.48" fill="#1d1f1e"/>
<rect x="1726" y="256.8" width="264" height="2.38" fill="#1d1f1e"/>
<rect x="1726" y="258.98" width="264" height="7.5" fill="#6182e1"/>
<rect x="1990" y="266.18" width="262" height="2.48" fill="#1d1f1e"/>
<rect x="1990" y="256.8" width="262" height="2.38" fill="#1d1f1e"/>
<rect x="1990" y="258.98" width="262" height="7.5" fill="#5873c9"/>
<rect x="2252" y="266.18" width="129.4" height="2.48" fill="#1d1f1e"/>
<rect x="2252" y="256.8" width="129.4" height="2.38" fill="#1d1f1e"/>
<rect x="2252" y="258.98" width="129.4" height="7.5" fill="#6182e1"/>
<rect x="1594" y="258.98" width="788" height="7.5" fill="url(#g)" opacity="0.28"/>
<rect x="1596" y="275.66" width="122" height="2.48" fill="#1d1f1e"/>
<rect x="1590.3" y="266.28" width="135.7" height="2.38" fill="#1d1f1e"/>
<rect x="1590.3" y="268.46" width="135.7" height="7.5" fill="#5873c9"/>
<rect x="1726" y="275.66" width="264" height="2.48" fill="#1d1f1e"/>
<rect x="1726" y="266.28" width="264" height="2.38" fill="#1d1f1e"/>
<rect x="1726" y="268.46" width="264" height="7.5" fill="#6182e1"/>
<rect x="1990" y="275.66" width="262" height="2.48" fill="#1d1f1e"/>
<rect x="1990" y="266.28" width="262" height="2.38" fill="#1d1f1e"/>
<rect x="1990" y="268.46" width="262" height="7.5" fill="#5873c9"/>
<rect x="2252" y="275.66" width="129.4" height="2.48" fill="#1d1f1e"/>
<rect x="2252" y="266.28" width="129.4" height="2.38" fill="#1d1f1e"/>
<rect x="2252" y="268.46" width="129.4" height="7.5" fill="#6182e1"/>
<rect x="1594" y="268.46" width="788" height="7.5" fill="url(#g)" opacity="0.28"/>
<rect x="1596.3" y="285.14" width="121.1" height="2.48" fill="#1d1f1e"/>
<rect x="1596.3" y="275.76" width="121.1" height="2.38" fill="#1d1f1e"/>
<rect x="1596.3" y="277.94" width="121.1" height="7.5" fill="#5873c9"/>
<rect x="1598" y="277.94" width="120" height="7.5" fill="url(#g)" opacity="0.28"/>
<rect x="1596.3" y="294.62" width="121.1" height="2.48" fill="#1d1f1e"/>
<rect x="1596.3" y="285.24" width="121.1" height="2.38" fill="#1d1f1e"/>
<rect x="1596.3" y="287.42" width="121.1" height="7.5" fill="#5873c9"/>
<rect x="1598" y="287.42" width="120" height="7.5" fill="url(#g)" opacity="0.28"/>
<rect x="1726.3" y="285.14" width="263.7" height="2.48" fill="#1d1f1e"/>
<rect x="1726.3" y="275.76" width="263.7" height="2.38" fill="#1d1f1e"/>
<rect x="1726.3" y="277.94" width="263.7" height="7.5" fill="#6182e1"/>
<rect x="1990" y="285.14" width="262" height="2.48" fill="#1d1f1e"/>
<rect x="1990" y="275.76" width="262" height="2.38" fill="#1d1f1e"/>
<rect x="1990" y="277.94" width="262" height="7.5" fill="#5873c9"/>
<rect x="2252" y="285.14" width="129.4" height="2.48" fill="#1d1f1e"/>
<rect x="2252" y="275.76" width="129.4" height="2.38" fill="#1d1f1e"/>
<rect x="2252" y="277.94" width="129.4" height="7.5" fill="#6182e1"/>
<rect x="1730" y="277.94" width="652" height="7.5" fill="url(#g)" opacity="0.28"/>
<rect x="1726.3" y="294.62" width="131.7" height="2.48" fill="#1d1f1e"/>
<rect x="1726.3" y="285.24" width="263.7" height="2.38" fill="#1d1f1e"/>
<rect x="1726.3" y="287.42" width="263.7" height="7.5" fill="#6182e1"/>
<rect x="1990" y="285.24" width="262" height="2.38" fill="#1d1f1e"/>
<rect x="1990" y="287.42" width="262" height="7.5" fill="#5873c9"/>
<rect x="2252" y="285.24" width="129.4" height="2.38" fill="#1d1f1e"/>
<rect x="2252" y="287.42" width="129.4" height="7.5" fill="#6182e1"/>
<rect x="1730" y="287.42" width="652" height="7.5" fill="url(#g)" opacity="0.28"/>
<rect x="1596.3" y="304.1" width="121.1" height="2.48" fill="#1d1f1e"/>
<rect x="1596.3" y="294.72" width="121.1" height="2.38" fill="#1d1f1e"/>
<rect x="1596.3" y="296.9" width="121.1" height="7.5" fill="#5873c9"/>
<rect x="1598" y="296.9" width="120" height="7.5" fill="url(#g)" opacity="0.28"/>
<rect x="1726.3" y="304.1" width="131.1" height="2.48" fill="#1d1f1e"/>
<rect x="1726.3" y="294.72" width="131.1" height="2.38" fill="#1d1f1e"/>
<rect x="1726.3" y="296.9" width="131.1" height="7.5" fill="#6182e1"/>
<rect x="1730" y="296.9" width="128" height="7.5" fill="url(#g)" opacity="0.28"/>
<rect x="1596.3" y="304.2" width="121.1" height="2.38" fill="#1d1f1e"/>
<rect x="1596.3" y="306.38" width="121.1" height="7.5" fill="#5873c9"/>
<rect x="1598" y="306.38" width="120" height="7.5" fill="url(#g)" opacity="0.28"/>
<rect x="1726.3" y="304.2" width="131.7" height="2.38" fill="#1d1f1e"/>
<rect x="1726.3" y="306.38" width="263.7" height="7.5" fill="#6182e1"/>
<rect x="1990" y="306.38" width="129.4" height="7.5" fill="#5873c9"/>
<rect x="1730" y="306.38" width="390" height="7.5" fill="url(#g)" opacity="0.28"/>
<rect x="284" y="321.8" width="130" height="12.3" fill="#ccfa52"/>
<rect x="414" y="321.8" width="198" height="12.3" fill="#b9e345"/>
<rect x="286" y="321.8" width="326" height="12.3" fill="url(#g)" opacity="0.22"/>
<rect x="628" y="321.8" width="16" height="12.3" fill="#b9e345"/>
<rect x="632" y="321.8" width="12" height="12.3" fill="url(#g)" opacity="0.22"/>
<rect x="660" y="321.8" width="16" height="12.3" fill="#b9e345"/>
<rect x="664" y="321.8" width="12" height="12.3" fill="url(#g)" opacity="0.22"/>
<rect x="694" y="321.8" width="16" height="12.3" fill="#ccfa52"/>
<rect x="696" y="321.8" width="14" height="12.3" fill="url(#g)" opacity="0.22"/>
<rect x="726" y="321.8" width="16" height="12.3" fill="#ccfa52"/>
<rect x="730" y="321.8" width="12" height="12.3" fill="url(#g)" opacity="0.22"/>
<rect x="1070" y="321.8" width="16" height="12.3" fill="#b9e345"/>
<rect x="1074" y="321.8" width="12" height="12.3" fill="url(#g)" opacity="0.22"/>
<rect x="1104" y="321.8" width="16" height="12.3" fill="#b9e345"/>
<rect x="1106" y="321.8" width="14" height="12.3" fill="url(#g)" opacity="0.22"/>
<rect x="1136" y="321.8" width="16" height="12.3" fill="#b9e345"/>
<rect x="1140" y="321.8" width="12" height="12.3" fill="url(#g)" opacity="0.22"/>
<rect x="1170" y="321.8" width="16" height="12.3" fill="#b9e345"/>
<rect x="1172" y="321.8" width="14" height="12.3" fill="url(#g)" opacity="0.22"/>
<rect x="1202" y="321.8" width="16" height="12.3" fill="#ccfa52"/>
<rect x="1206" y="321.8" width="12" height="12.3" fill="url(#g)" opacity="0.22"/>
<rect x="1234" y="321.8" width="16" height="12.3" fill="#ccfa52"/>
<rect x="1238" y="321.8" width="12" height="12.3" fill="url(#g)" opacity="0.22"/>
<rect x="1268" y="321.8" width="196" height="12.3" fill="#ccfa52"/>
<rect x="1270" y="321.8" width="194" height="12.3" fill="url(#g)" opacity="0.22"/>
<rect x="792" y="335.7" width="148" height="12.3" fill="#ccfa52"/>
<rect x="796" y="335.7" width="144" height="12.3" fill="url(#g)" opacity="0.22"/>
<rect x="1596" y="335.7" width="16" height="12.3" fill="#b9e345"/>
<rect x="1598" y="335.7" width="14" height="12.3" fill="url(#g)" opacity="0.22"/>
<rect x="1628" y="335.7" width="16" height="12.3" fill="#b9e345"/>
<rect x="1632" y="335.7" width="12" height="12.3" fill="url(#g)" opacity="0.22"/>
<rect x="1662" y="335.7" width="16" height="12.3" fill="#b9e345"/>
<rect x="1664" y="335.7" width="14" height="12.3" fill="url(#g)" opacity="0.22"/>
<rect x="1694" y="335.7" width="16" height="12.3" fill="#b9e345"/>
<rect x="1698" y="335.7" width="12" height="12.3" fill="url(#g)" opacity="0.22"/>
<rect x="1726" y="335.7" width="132" height="12.3" fill="#ccfa52"/>
<rect x="1730" y="335.7" width="128" height="12.3" fill="url(#g)" opacity="0.22"/>
<rect x="1398" y="174" width="68" height="34" fill="#42875f"/>
<rect x="1400" y="176" width="32" height="30" fill="#7dfab2"/>
<rect x="1398" y="208" width="2" height="36" fill="#37766b"/>
<rect x="1400" y="208" width="32" height="36" fill="#6bd1c1"/>
<rect x="1432" y="208" width="34" height="36" fill="#376e67"/>
<rect x="1400.2" y="216.4" width="15.6" height="15.2" fill="#1a2322"/>
<rect x="1418.2" y="216.4" width="13.7" height="15.2" fill="#1a2322"/>
<rect x="414" y="534" width="1510" height="36" fill="#aabfe3"/>
<rect x="414" y="534" width="1510" height="36" fill="url(#gb)"/>
<rect x="612" y="534" width="1.5" height="36" fill="#6f7480"/>
<rect x="644" y="534" width="1.5" height="36" fill="#6f7480"/>
<rect x="678" y="534" width="1.5" height="36" fill="#6f7480"/>
<rect x="710" y="534" width="1.5" height="36" fill="#6f7480"/>
<rect x="742" y="534" width="1.5" height="36" fill="#6f7480"/>
<rect x="776" y="534" width="1.5" height="36" fill="#6f7480"/>
<rect x="808" y="534" width="1.5" height="36" fill="#6f7480"/>
<rect x="842" y="534" width="1.5" height="36" fill="#6f7480"/>
<rect x="874" y="534" width="1.5" height="36" fill="#6f7480"/>
<rect x="906" y="534" width="1.5" height="36" fill="#6f7480"/>
<rect x="940" y="534" width="1.5" height="36" fill="#6f7480"/>
<rect x="1334" y="534" width="1.5" height="36" fill="#6f7480"/>
<rect x="1596" y="534" width="1.5" height="36" fill="#6f7480"/>
<rect x="1628" y="534" width="1.5" height="36" fill="#6f7480"/>
<rect x="1662" y="534" width="1.5" height="36" fill="#6f7480"/>
<rect x="1694" y="534" width="1.5" height="36" fill="#6f7480"/>
<rect x="1726" y="534" width="1.5" height="36" fill="#6f7480"/>
<rect x="414" y="500.2" width="198" height="33.6" fill="#7d7679"/>
<rect x="415.6" y="502.1" width="196.4" height="29.7" fill="#e5dee1"/>
<rect x="432" y="502.3" width="2" height="5.4" fill="#1b0f14"/>
<rect x="448" y="502.3" width="2" height="5.4" fill="#1b0f14"/>
<rect x="464" y="502.3" width="2" height="5.4" fill="#1b0f14"/>
<rect x="480" y="502.3" width="2" height="5.4" fill="#1b0f14"/>
<rect x="496" y="502.3" width="2" height="5.4" fill="#1b0f14"/>
<rect x="514" y="502.3" width="2" height="5.4" fill="#1b0f14"/>
<rect x="530" y="502.3" width="2" height="5.4" fill="#1b0f14"/>
<rect x="546" y="502.3" width="2" height="5.4" fill="#1b0f14"/>
<rect x="562" y="502.3" width="2" height="5.4" fill="#1b0f14"/>
<rect x="578" y="502.3" width="2" height="5.4" fill="#1b0f14"/>
<rect x="596" y="502.3" width="2" height="5.4" fill="#1b0f14"/>
<rect x="612" y="500.2" width="16" height="33.6" fill="#7d7679"/>
<rect x="613.6" y="502.1" width="14.4" height="29.7" fill="#e5dee1"/>
<rect transform="translate(628,500)" width="16" height="33.6" fill="url(#h)"/>
<rect x="628" y="523.8" width="16" height="9.8" fill="#1e1e1e" opacity="0.3"/>
<rect x="644" y="500.2" width="16" height="33.6" fill="#7d7679"/>
<rect x="645.6" y="502.1" width="14.4" height="29.7" fill="#e5dee1"/>
<rect transform="translate(660,500)" width="18" height="33.6" fill="url(#h)"/>
<rect x="660" y="523.8" width="18" height="9.8" fill="#1e1e1e" opacity="0.3"/>
<rect x="678" y="500.2" width="16" height="33.6" fill="#7d7679"/>
<rect x="679.6" y="502.1" width="14.4" height="29.7" fill="#e5dee1"/>
<rect transform="translate(694,500)" width="16" height="33.6" fill="url(#h)"/>
<rect x="694" y="523.8" width="16" height="9.8" fill="#1e1e1e" opacity="0.3"/>
<rect x="710" y="500.2" width="16" height="33.6" fill="#7d7679"/>
<rect x="711.6" y="502.1" width="14.4" height="29.7" fill="#e5dee1"/>
<rect transform="translate(726,500)" width="16" height="33.6" fill="url(#h)"/>
<rect x="726" y="523.8" width="16" height="9.8" fill="#1e1e1e" opacity="0.3"/>
<rect x="742" y="500.2" width="18" height="33.6" fill="#7d7679"/>
<rect x="743.6" y="502.1" width="16.4" height="29.7" fill="#e5dee1"/>
<rect transform="translate(760,500)" width="16" height="33.6" fill="url(#h)"/>
<rect x="760" y="523.8" width="16" height="9.8" fill="#1e1e1e" opacity="0.3"/>
<rect x="776" y="500.2" width="16" height="33.6" fill="#7d7679"/>
<rect x="777.6" y="502.1" width="14.4" height="29.7" fill="#e5dee1"/>
<rect transform="translate(792,500)" width="16" height="33.6" fill="url(#h)"/>
<rect x="792" y="523.8" width="16" height="9.8" fill="#1e1e1e" opacity="0.3"/>
<rect x="808" y="500.2" width="16" height="33.6" fill="#7d7679"/>
<rect x="809.6" y="502.1" width="14.4" height="29.7" fill="#e5dee1"/>
<rect transform="translate(824,500)" width="18" height="33.6" fill="url(#h)"/>
<rect x="824" y="523.8" width="18" height="9.8" fill="#1e1e1e" opacity="0.3"/>
<rect x="842" y="500.2" width="16" height="33.6" fill="#7d7679"/>
<rect x="843.6" y="502.1" width="14.4" height="29.7" fill="#e5dee1"/>
<rect transform="translate(858,500)" width="16" height="33.6" fill="url(#h)"/>
<rect x="858" y="523.8" width="16" height="9.8" fill="#1e1e1e" opacity="0.3"/>
<rect x="874" y="500.2" width="16" height="33.6" fill="#7d7679"/>
<rect x="875.6" y="502.1" width="14.4" height="29.7" fill="#e5dee1"/>
<rect transform="translate(890,500)" width="16" height="33.6" fill="url(#h)"/>
<rect x="890" y="523.8" width="16" height="9.8" fill="#1e1e1e" opacity="0.3"/>
<rect x="906" y="500.2" width="18" height="33.6" fill="#7d7679"/>
<rect x="907.6" y="502.1" width="16.4" height="29.7" fill="#e5dee1"/>
<rect transform="translate(924,500)" width="16" height="33.6" fill="url(#h)"/>
<rect x="924" y="523.8" width="16" height="9.8" fill="#1e1e1e" opacity="0.3"/>
<rect x="940" y="500.2" width="130" height="33.6" fill="#7d7679"/>
<rect x="941.6" y="502.1" width="128.4" height="29.7" fill="#e5dee1"/>
<rect x="972" y="502.3" width="2" height="5.4" fill="#1b0f14"/>
<rect x="1006" y="502.3" width="2" height="5.4" fill="#1b0f14"/>
<rect x="1038" y="502.3" width="2" height="5.4" fill="#1b0f14"/>
<rect transform="translate(1070,500)" width="264" height="33.6" fill="url(#h)"/>
<rect x="1070" y="523.8" width="264" height="9.8" fill="#1e1e1e" opacity="0.3"/>
<rect x="1334" y="500.2" width="130" height="33.6" fill="#7d7679"/>
<rect x="1335.6" y="502.1" width="128.4" height="29.7" fill="#e5dee1"/>
<rect x="1350" y="502.3" width="2" height="5.4" fill="#1b0f14"/>
<rect x="1366" y="502.3" width="2" height="5.4" fill="#1b0f14"/>
<rect x="1382" y="502.3" width="2" height="5.4" fill="#1b0f14"/>
<rect x="1398" y="502.3" width="2" height="5.4" fill="#1b0f14"/>
<rect x="1416" y="502.3" width="2" height="5.4" fill="#1b0f14"/>
<rect x="1432" y="502.3" width="2" height="5.4" fill="#1b0f14"/>
<rect x="1448" y="502.3" width="2" height="5.4" fill="#1b0f14"/>
<rect transform="translate(1464,500)" width="132" height="33.6" fill="url(#h)"/>
<rect x="1464" y="523.8" width="132" height="9.8" fill="#1e1e1e" opacity="0.3"/>
<rect x="1596" y="500.2" width="16" height="33.6" fill="#7d7679"/>
<rect x="1597.6" y="502.1" width="14.4" height="29.7" fill="#e5dee1"/>
<rect transform="translate(1612,500)" width="16" height="33.6" fill="url(#h)"/>
<rect x="1612" y="523.8" width="16" height="9.8" fill="#1e1e1e" opacity="0.3"/>
<rect x="1628" y="500.2" width="16" height="33.6" fill="#7d7679"/>
<rect x="1629.6" y="502.1" width="14.4" height="29.7" fill="#e5dee1"/>
<rect transform="translate(1644,500)" width="18" height="33.6" fill="url(#h)"/>
<rect x="1644" y="523.8" width="18" height="9.8" fill="#1e1e1e" opacity="0.3"/>
<rect x="1662" y="500.2" width="16" height="33.6" fill="#7d7679"/>
<rect x="1663.6" y="502.1" width="14.4" height="29.7" fill="#e5dee1"/>
<rect transform="translate(1678,500)" width="16" height="33.6" fill="url(#h)"/>
<rect x="1678" y="523.8" width="16" height="9.8" fill="#1e1e1e" opacity="0.3"/>
<rect x="1694" y="500.2" width="16" height="33.6" fill="#7d7679"/>
<rect x="1695.6" y="502.1" width="14.4" height="29.7" fill="#e5dee1"/>
<rect transform="translate(1710,500)" width="16" height="33.6" fill="url(#h)"/>
<rect x="1710" y="523.8" width="16" height="9.8" fill="#1e1e1e" opacity="0.3"/>
<rect x="1726" y="500.2" width="132" height="33.6" fill="#7d7679"/>
<rect x="1727.6" y="502.1" width="130.4" height="29.7" fill="#e5dee1"/>
<rect x="1744" y="502.3" width="2" height="5.4" fill="#1b0f14"/>
<rect x="1760" y="502.3" width="2" height="5.4" fill="#1b0f14"/>
<rect x="1776" y="502.3" width="2" height="5.4" fill="#1b0f14"/>
<rect x="1792" y="502.3" width="2" height="5.4" fill="#1b0f14"/>
<rect x="1808" y="502.3" width="2" height="5.4" fill="#1b0f14"/>
<rect x="1826" y="502.3" width="2" height="5.4" fill="#1b0f14"/>
<rect x="1842" y="502.3" width="2" height="5.4" fill="#1b0f14"/>
<rect transform="translate(1858,500)" width="66" height="33.6" fill="url(#h)"/>
<rect x="1858" y="523.8" width="66" height="9.8" fill="#1e1e1e" opacity="0.3"/>
<rect x="415.2" y="564.2" width="12.9" height="1.8" fill="#1b0f14"/>
<rect x="433.2" y="564.2" width="12.9" height="1.8" fill="#1b0f14"/>
<rect x="432" y="564.2" width="2" height="5.8" fill="#1b0f14"/>
<rect x="449.2" y="564.2" width="12.9" height="1.8" fill="#1b0f14"/>
<rect x="448" y="564.2" width="2" height="5.8" fill="#1b0f14"/>
<rect x="465.2" y="564.2" width="12.9" height="1.8" fill="#1b0f14"/>
<rect x="464" y="564.2" width="2" height="5.8" fill="#1b0f14"/>
<rect x="481.2" y="564.2" width="12.9" height="1.8" fill="#1b0f14"/>
<rect x="480" y="564.2" width="2" height="5.8" fill="#1b0f14"/>
<rect x="497.2" y="564.2" width="12.9" height="1.8" fill="#1b0f14"/>
<rect x="496" y="564.2" width="2" height="5.8" fill="#1b0f14"/>
<rect x="515.2" y="564.2" width="12.9" height="1.8" fill="#1b0f14"/>
<rect x="514" y="564.2" width="2" height="5.8" fill="#1b0f14"/>
<rect x="531.2" y="564.2" width="12.9" height="1.8" fill="#1b0f14"/>
<rect x="530" y="564.2" width="2" height="5.8" fill="#1b0f14"/>
<rect x="547.2" y="564.2" width="12.9" height="1.8" fill="#1b0f14"/>
<rect x="546" y="564.2" width="2" height="5.8" fill="#1b0f14"/>
<rect x="563.2" y="564.2" width="12.9" height="1.8" fill="#1b0f14"/>
<rect x="562" y="564.2" width="2" height="5.8" fill="#1b0f14"/>
<rect x="579.2" y="564.2" width="12.9" height="1.8" fill="#1b0f14"/>
<rect x="578" y="564.2" width="2" height="5.8" fill="#1b0f14"/>
<rect x="597.2" y="564.2" width="12.9" height="1.8" fill="#1b0f14"/>
<rect x="596" y="564.2" width="2" height="5.8" fill="#1b0f14"/>
<rect x="1335.2" y="564.2" width="12.9" height="1.8" fill="#1b0f14"/>
<rect x="1351.2" y="564.2" width="12.9" height="1.8" fill="#1b0f14"/>
<rect x="1350" y="564.2" width="2" height="5.8" fill="#1b0f14"/>
<rect x="1367.2" y="564.2" width="12.9" height="1.8" fill="#1b0f14"/>
<rect x="1366" y="564.2" width="2" height="5.8" fill="#1b0f14"/>
<rect x="1383.2" y="564.2" width="12.9" height="1.8" fill="#1b0f14"/>
<rect x="1382" y="564.2" width="2" height="5.8" fill="#1b0f14"/>
<rect x="1399.2" y="564.2" width="12.9" height="1.8" fill="#1b0f14"/>
<rect x="1398" y="564.2" width="2" height="5.8" fill="#1b0f14"/>
<rect x="1417.2" y="564.2" width="12.9" height="1.8" fill="#1b0f14"/>
<rect x="1416" y="564.2" width="2" height="5.8" fill="#1b0f14"/>
<rect x="1433.2" y="564.2" width="12.9" height="1.8" fill="#1b0f14"/>
<rect x="1432" y="564.2" width="2" height="5.8" fill="#1b0f14"/>
<rect x="1449.2" y="564.2" width="12.9" height="1.8" fill="#1b0f14"/>
<rect x="1448" y="564.2" width="2" height="5.8" fill="#1b0f14"/>
<rect x="1727.2" y="564.2" width="12.9" height="1.8" fill="#1b0f14"/>
<rect x="1745.2" y="564.2" width="12.9" height="1.8" fill="#1b0f14"/>
<rect x="1744" y="564.2" width="2" height="5.8" fill="#1b0f14"/>
<rect x="1761.2" y="564.2" width="12.9" height="1.8" fill="#1b0f14"/>
<rect x="1760" y="564.2" width="2" height="5.8" fill="#1b0f14"/>
<rect x="1777.2" y="564.2" width="12.9" height="1.8" fill="#1b0f14"/>
<rect x="1776" y="564.2" width="2" height="5.8" fill="#1b0f14"/>
<rect x="1793.2" y="564.2" width="12.9" height="1.8" fill="#1b0f14"/>
<rect x="1792" y="564.2" width="2" height="5.8" fill="#1b0f14"/>
<rect x="1809.2" y="564.2" width="12.9" height="1.8" fill="#1b0f14"/>
<rect x="1808" y="564.2" width="2" height="5.8" fill="#1b0f14"/>
<rect x="1827.2" y="564.2" width="12.9" height="1.8" fill="#1b0f14"/>
<rect x="1826" y="564.2" width="2" height="5.8" fill="#1b0f14"/>
<rect x="1843.2" y="564.2" width="12.9" height="1.8" fill="#1b0f14"/>
<rect x="1842" y="564.2" width="2" height="5.8" fill="#1b0f14"/>
<rect x="614" y="564.2" width="12" height="1.8" fill="#140d10"/>
<rect x="646" y="564.2" width="12" height="1.8" fill="#140d10"/>
<rect x="680" y="564.2" width="12" height="1.8" fill="#140d10"/>
<rect x="712" y="564.2" width="12" height="1.8" fill="#140d10"/>
<rect x="744" y="564.2" width="12" height="1.8" fill="#140d10"/>
<rect x="778" y="564.2" width="12" height="1.8" fill="#140d10"/>
<rect x="810" y="564.2" width="12" height="1.8" fill="#140d10"/>
<rect x="844" y="564.2" width="12" height="1.8" fill="#140d10"/>
<rect x="876" y="564.2" width="12" height="1.8" fill="#140d10"/>
<rect x="908" y="564.2" width="12" height="1.8" fill="#140d10"/>
<rect x="1598" y="564.2" width="12" height="1.8" fill="#140d10"/>
<rect x="1630" y="564.2" width="12" height="1.8" fill="#140d10"/>
<rect x="1664" y="564.2" width="12" height="1.8" fill="#140d10"/>
<rect x="1696" y="564.2" width="12" height="1.8" fill="#140d10"/>
<rect x="941.5" y="564.3" width="1.9" height="1.7" fill="#1b0f14"/>
<rect x="945.4" y="564.3" width="1.9" height="1.7" fill="#1b0f14"/>
<rect x="949.3" y="564.3" width="1.9" height="1.7" fill="#1b0f14"/>
<rect x="953.2" y="564.3" width="1.9" height="1.7" fill="#1b0f14"/>
<rect x="957.5" y="564.3" width="1.9" height="1.7" fill="#1b0f14"/>
<rect x="961.4" y="564.3" width="1.9" height="1.7" fill="#1b0f14"/>
<rect x="965.3" y="564.3" width="1.9" height="1.7" fill="#1b0f14"/>
<rect x="969.2" y="564.3" width="1.9" height="1.7" fill="#1b0f14"/>
<rect x="973.5" y="564.3" width="1.9" height="1.7" fill="#1b0f14"/>
<rect x="977.4" y="564.3" width="1.9" height="1.7" fill="#1b0f14"/>
<rect x="981.3" y="564.3" width="1.9" height="1.7" fill="#1b0f14"/>
<rect x="985.2" y="564.3" width="1.9" height="1.7" fill="#1b0f14"/>
<rect x="972" y="564.2" width="2" height="5.8" fill="#1b0f14"/>
<rect x="989.5" y="564.3" width="1.9" height="1.7" fill="#1b0f14"/>
<rect x="993.4" y="564.3" width="1.9" height="1.7" fill="#1b0f14"/>
<rect x="997.3" y="564.3" width="1.9" height="1.7" fill="#1b0f14"/>
<rect x="1001.2" y="564.3" width="1.9" height="1.7" fill="#1b0f14"/>
<rect x="1007.5" y="564.3" width="1.9" height="1.7" fill="#1b0f14"/>
<rect x="1011.4" y="564.3" width="1.9" height="1.7" fill="#1b0f14"/>
<rect x="1015.3" y="564.3" width="1.9" height="1.7" fill="#1b0f14"/>
<rect x="1019.2" y="564.3" width="1.9" height="1.7" fill="#1b0f14"/>
<rect x="1006" y="564.2" width="2" height="5.8" fill="#1b0f14"/>
<rect x="1023.5" y="564.3" width="1.9" height="1.7" fill="#1b0f14"/>
<rect x="1027.4" y="564.3" width="1.9" height="1.7" fill="#1b0f14"/>
<rect x="1031.3" y="564.3" width="1.9" height="1.7" fill="#1b0f14"/>
<rect x="1035.2" y="564.3" width="1.9" height="1.7" fill="#1b0f14"/>
<rect x="1039.5" y="564.3" width="1.9" height="1.7" fill="#1b0f14"/>
<rect x="1043.4" y="564.3" width="1.9" height="1.7" fill="#1b0f14"/>
<rect x="1047.3" y="564.3" width="1.9" height="1.7" fill="#1b0f14"/>
<rect x="1051.2" y="564.3" width="1.9" height="1.7" fill="#1b0f14"/>
<rect x="1038" y="564.2" width="2" height="5.8" fill="#1b0f14"/>
<rect x="1055.5" y="564.3" width="1.9" height="1.7" fill="#1b0f14"/>
<rect x="1059.4" y="564.3" width="1.9" height="1.7" fill="#1b0f14"/>
<rect x="1063.3" y="564.3" width="1.9" height="1.7" fill="#1b0f14"/>
<rect x="1067.2" y="564.3" width="1.9" height="1.7" fill="#1b0f14"/>
<rect x="612" y="608" width="1146" height="36" fill="#aabfe3"/>
<rect x="612" y="608" width="1146" height="36" fill="url(#gb)"/>
<rect x="612" y="608" width="1.5" height="36" fill="#6f7480"/>
<rect x="644" y="608" width="1.5" height="36" fill="#6f7480"/>
<rect x="678" y="608" width="1.5" height="36" fill="#6f7480"/>
<rect x="710" y="608" width="1.5" height="36" fill="#6f7480"/>
<rect x="742" y="608" width="1.5" height="36" fill="#6f7480"/>
<rect x="776" y="608" width="1.5" height="36" fill="#6f7480"/>
<rect x="808" y="608" width="1.5" height="36" fill="#6f7480"/>
<rect x="842" y="608" width="1.5" height="36" fill="#6f7480"/>
<rect x="874" y="608" width="1.5" height="36" fill="#6f7480"/>
<rect x="906" y="608" width="1.5" height="36" fill="#6f7480"/>
<rect x="1596" y="608" width="1.5" height="36" fill="#6f7480"/>
<rect x="1628" y="608" width="1.5" height="36" fill="#6f7480"/>
<rect x="1662" y="608" width="1.5" height="36" fill="#6f7480"/>
<rect x="1694" y="608" width="1.5" height="36" fill="#6f7480"/>
<rect x="612" y="574.2" width="16" height="33.6" fill="#7d7679"/>
<rect x="613.6" y="576.1" width="14.4" height="29.7" fill="#e5dee1"/>
<rect transform="translate(628,574)" width="16" height="33.6" fill="url(#h)"/>
<rect x="628" y="597.8" width="16" height="9.8" fill="#1e1e1e" opacity="0.3"/>
<rect x="644" y="574.2" width="16" height="33.6" fill="#7d7679"/>
<rect x="645.6" y="576.1" width="14.4" height="29.7" fill="#e5dee1"/>
<rect transform="translate(660,574)" width="18" height="33.6" fill="url(#h)"/>
<rect x="660" y="597.8" width="18" height="9.8" fill="#1e1e1e" opacity="0.3"/>
<rect x="678" y="574.2" width="16" height="33.6" fill="#7d7679"/>
<rect x="679.6" y="576.1" width="14.4" height="29.7" fill="#e5dee1"/>
<rect transform="translate(694,574)" width="16" height="33.6" fill="url(#h)"/>
<rect x="694" y="597.8" width="16" height="9.8" fill="#1e1e1e" opacity="0.3"/>
<rect x="710" y="574.2" width="16" height="33.6" fill="#7d7679"/>
<rect x="711.6" y="576.1" width="14.4" height="29.7" fill="#e5dee1"/>
<rect transform="translate(726,574)" width="16" height="33.6" fill="url(#h)"/>
<rect x="726" y="597.8" width="16" height="9.8" fill="#1e1e1e" opacity="0.3"/>
<rect x="742" y="574.2" width="18" height="33.6" fill="#7d7679"/>
<rect x="743.6" y="576.1" width="16.4" height="29.7" fill="#e5dee1"/>
<rect transform="translate(760,574)" width="16" height="33.6" fill="url(#h)"/>
<rect x="760" y="597.8" width="16" height="9.8" fill="#1e1e1e" opacity="0.3"/>
<rect x="776" y="574.2" width="16" height="33.6" fill="#7d7679"/>
<rect x="777.6" y="576.1" width="14.4" height="29.7" fill="#e5dee1"/>
<rect transform="translate(792,574)" width="16" height="33.6" fill="url(#h)"/>
<rect x="792" y="597.8" width="16" height="9.8" fill="#1e1e1e" opacity="0.3"/>
<rect x="808" y="574.2" width="16" height="33.6" fill="#7d7679"/>
<rect x="809.6" y="576.1" width="14.4" height="29.7" fill="#e5dee1"/>
<rect transform="translate(824,574)" width="18" height="33.6" fill="url(#h)"/>
<rect x="824" y="597.8" width="18" height="9.8" fill="#1e1e1e" opacity="0.3"/>
<rect x="842" y="574.2" width="16" height="33.6" fill="#7d7679"/>
<rect x="843.6" y="576.1" width="14.4" height="29.7" fill="#e5dee1"/>
<rect transform="translate(858,574)" width="16" height="33.6" fill="url(#h)"/>
<rect x="858" y="597.8" width="16" height="9.8" fill="#1e1e1e" opacity="0.3"/>
<rect x="874" y="574.2" width="16" height="33.6" fill="#7d7679"/>
<rect x="875.6" y="576.1" width="14.4" height="29.7" fill="#e5dee1"/>
<rect transform="translate(890,574)" width="16" height="33.6" fill="url(#h)"/>
<rect x="890" y="597.8" width="16" height="9.8" fill="#1e1e1e" opacity="0.3"/>
<rect x="906" y="574.2" width="18" height="33.6" fill="#7d7679"/>
<rect x="907.6" y="576.1" width="16.4" height="29.7" fill="#e5dee1"/>
<rect transform="translate(924,574)" width="672" height="33.6" fill="url(#h)"/>
<rect x="924" y="597.8" width="672" height="9.8" fill="#1e1e1e" opacity="0.3"/>
<rect x="1596" y="574.2" width="16" height="33.6" fill="#7d7679"/>
<rect x="1597.6" y="576.1" width="14.4" height="29.7" fill="#e5dee1"/>
<rect transform="translate(1612,574)" width="16" height="33.6" fill="url(#h)"/>
<rect x="1612" y="597.8" width="16" height="9.8" fill="#1e1e1e" opacity="0.3"/>
<rect x="1628" y="574.2" width="16" height="33.6" fill="#7d7679"/>
<rect x="1629.6" y="576.1" width="14.4" height="29.7" fill="#e5dee1"/>
<rect transform="translate(1644,574)" width="18" height="33.6" fill="url(#h)"/>
<rect x="1644" y="597.8" width="18" height="9.8" fill="#1e1e1e" opacity="0.3"/>
<rect x="1662" y="574.2" width="16" height="33.6" fill="#7d7679"/>
<rect x="1663.6" y="576.1" width="14.4" height="29.7" fill="#e5dee1"/>
<rect transform="translate(1678,574)" width="16" height="33.6" fill="url(#h)"/>
<rect x="1678" y="597.8" width="16" height="9.8" fill="#1e1e1e" opacity="0.3"/>
<rect x="1694" y="574.2" width="16" height="33.6" fill="#7d7679"/>
<rect x="1695.6" y="576.1" width="14.4" height="29.7" fill="#e5dee1"/>
<rect transform="translate(1710,574)" width="48" height="33.6" fill="url(#h)"/>
<rect x="1710" y="597.8" width="48" height="9.8" fill="#1e1e1e" opacity="0.3"/>
<rect x="614" y="616.3" width="12" height="15.2" fill="#1a1a1c"/>
<rect x="618.2" y="616.3" width="0.8" height="15.2" fill="#2c2c30"/>
<rect x="622.4" y="616.3" width="0.8" height="15.2" fill="#2c2c30"/>
<rect x="646" y="616.3" width="12" height="15.2" fill="#1a1a1c"/>
<rect x="650.2" y="616.3" width="0.8" height="15.2" fill="#2c2c30"/>
<rect x="654.4" y="616.3" width="0.8" height="15.2" fill="#2c2c30"/>
<rect x="680" y="616.3" width="12" height="15.2" fill="#1a1a1c"/>
<rect x="684.2" y="616.3" width="0.8" height="15.2" fill="#2c2c30"/>
<rect x="688.4" y="616.3" width="0.8" height="15.2" fill="#2c2c30"/>
<rect x="712" y="616.3" width="12" height="15.2" fill="#1a1a1c"/>
<rect x="716.2" y="616.3" width="0.8" height="15.2" fill="#2c2c30"/>
<rect x="720.4" y="616.3" width="0.8" height="15.2" fill="#2c2c30"/>
<rect x="744" y="616.3" width="14" height="15.2" fill="#1a1a1c"/>
<rect x="748.2" y="616.3" width="0.8" height="15.2" fill="#2c2c30"/>
<rect x="752.4" y="616.3" width="0.8" height="15.2" fill="#2c2c30"/>
<rect x="778" y="616.3" width="12" height="15.2" fill="#1a1a1c"/>
<rect x="782.2" y="616.3" width="0.8" height="15.2" fill="#2c2c30"/>
<rect x="786.4" y="616.3" width="0.8" height="15.2" fill="#2c2c30"/>
<rect x="810" y="616.3" width="12" height="15.2" fill="#1a1a1c"/>
<rect x="814.2" y="616.3" width="0.8" height="15.2" fill="#2c2c30"/>
<rect x="818.4" y="616.3" width="0.8" height="15.2" fill="#2c2c30"/>
<rect x="844" y="616.3" width="12" height="15.2" fill="#1a1a1c"/>
<rect x="848.2" y="616.3" width="0.8" height="15.2" fill="#2c2c30"/>
<rect x="852.4" y="616.3" width="0.8" height="15.2" fill="#2c2c30"/>
<rect x="876" y="616.3" width="12" height="15.2" fill="#1a1a1c"/>
<rect x="880.2" y="616.3" width="0.8" height="15.2" fill="#2c2c30"/>
<rect x="884.4" y="616.3" width="0.8" height="15.2" fill="#2c2c30"/>
<rect x="908" y="616.3" width="14" height="15.2" fill="#1a1a1c"/>
<rect x="912.2" y="616.3" width="0.8" height="15.2" fill="#2c2c30"/>
<rect x="916.4" y="616.3" width="0.8" height="15.2" fill="#2c2c30"/>
<rect x="1598" y="616.3" width="12" height="15.2" fill="#1a1a1c"/>
<rect x="1602.2" y="616.3" width="0.8" height="15.2" fill="#2c2c30"/>
<rect x="1606.4" y="616.3" width="0.8" height="15.2" fill="#2c2c30"/>
<rect x="1630" y="616.3" width="12" height="15.2" fill="#1a1a1c"/>
<rect x="1634.2" y="616.3" width="0.8" height="15.2" fill="#2c2c30"/>
<rect x="1638.4" y="616.3" width="0.8" height="15.2" fill="#2c2c30"/>
<rect x="1664" y="616.3" width="12" height="15.2" fill="#1a1a1c"/>
<rect x="1668.2" y="616.3" width="0.8" height="15.2" fill="#2c2c30"/>
<rect x="1672.4" y="616.3" width="0.8" height="15.2" fill="#2c2c30"/>
<rect x="1696" y="616.3" width="12" height="15.2" fill="#1a1a1c"/>
<rect x="1700.2" y="616.3" width="0.8" height="15.2" fill="#2c2c30"/>
<rect x="1704.4" y="616.3" width="0.8" height="15.2" fill="#2c2c30"/>
<rect x="612" y="648.2" width="16" height="33.6" fill="#7d7679"/>
<rect x="613.6" y="650.1" width="14.4" height="29.7" fill="#e5dee1"/>
<rect transform="translate(628,648)" width="16" height="33.6" fill="url(#h)"/>
<rect x="628" y="671.8" width="16" height="9.8" fill="#1e1e1e" opacity="0.3"/>
<rect x="644" y="648.2" width="16" height="33.6" fill="#7d7679"/>
<rect x="645.6" y="650.1" width="14.4" height="29.7" fill="#e5dee1"/>
<rect transform="translate(660,648)" width="18" height="33.6" fill="url(#h)"/>
<rect x="660" y="671.8" width="18" height="9.8" fill="#1e1e1e" opacity="0.3"/>
<rect x="678" y="648.2" width="16" height="33.6" fill="#7d7679"/>
<rect x="679.6" y="650.1" width="14.4" height="29.7" fill="#e5dee1"/>
<rect transform="translate(694,648)" width="16" height="33.6" fill="url(#h)"/>
<rect x="694" y="671.8" width="16" height="9.8" fill="#1e1e1e" opacity="0.3"/>
<rect x="710" y="648.2" width="16" height="33.6" fill="#7d7679"/>
<rect x="711.6" y="650.1" width="14.4" height="29.7" fill="#e5dee1"/>
<rect transform="translate(726,648)" width="16" height="33.6" fill="url(#h)"/>
<rect x="726" y="671.8" width="16" height="9.8" fill="#1e1e1e" opacity="0.3"/>
<rect x="742" y="648.2" width="18" height="33.6" fill="#7d7679"/>
<rect x="743.6" y="650.1" width="16.4" height="29.7" fill="#e5dee1"/>
<rect transform="translate(760,648)" width="16" height="33.6" fill="url(#h)"/>
<rect x="760" y="671.8" width="16" height="9.8" fill="#1e1e1e" opacity="0.3"/>
<rect x="776" y="648.2" width="16" height="33.6" fill="#7d7679"/>
<rect x="777.6" y="650.1" width="14.4" height="29.7" fill="#e5dee1"/>
<rect transform="translate(792,648)" width="16" height="33.6" fill="url(#h)"/>
<rect x="792" y="671.8" width="16" height="9.8" fill="#1e1e1e" opacity="0.3"/>
<rect x="808" y="648.2" width="16" height="33.6" fill="#7d7679"/>
<rect x="809.6" y="650.1" width="14.4" height="29.7" fill="#e5dee1"/>
<rect transform="translate(824,648)" width="18" height="33.6" fill="url(#h)"/>
<rect x="824" y="671.8" width="18" height="9.8" fill="#1e1e1e" opacity="0.3"/>
<rect x="842" y="648.2" width="16" height="33.6" fill="#7d7679"/>
<rect x="843.6" y="650.1" width="14.4" height="29.7" fill="#e5dee1"/>
<rect transform="translate(858,648)" width="16" height="33.6" fill="url(#h)"/>
<rect x="858" y="671.8" width="16" height="9.8" fill="#1e1e1e" opacity="0.3"/>
<rect x="874" y="648.2" width="16" height="33.6" fill="#7d7679"/>
<rect x="875.6" y="650.1" width="14.4" height="29.7" fill="#e5dee1"/>
<rect transform="translate(890,648)" width="16" height="33.6" fill="url(#h)"/>
<rect x="890" y="671.8" width="16" height="9.8" fill="#1e1e1e" opacity="0.3"/>
<rect x="906" y="648.2" width="18" height="33.6" fill="#7d7679"/>
<rect x="907.6" y="650.1" width="16.4" height="29.7" fill="#e5dee1"/>
<rect transform="translate(924,648)" width="672" height="33.6" fill="url(#h)"/>
<rect x="924" y="671.8" width="672" height="9.8" fill="#1e1e1e" opacity="0.3"/>
<rect x="1596" y="648.2" width="16" height="33.6" fill="#7d7679"/>
<rect x="1597.6" y="650.1" width="14.4" height="29.7" fill="#e5dee1"/>
<rect transform="translate(1612,648)" width="16" height="33.6" fill="url(#h)"/>
<rect x="1612" y="671.8" width="16" height="9.8" fill="#1e1e1e" opacity="0.3"/>
<rect x="1628" y="648.2" width="16" height="33.6" fill="#7d7679"/>
<rect x="1629.6" y="650.1" width="14.4" height="29.7" fill="#e5dee1"/>
<rect transform="translate(1644,648)" width="18" height="33.6" fill="url(#h)"/>
<rect x="1644" y="671.8" width="18" height="9.8" fill="#1e1e1e" opacity="0.3"/>
<rect x="1662" y="648.2" width="16" height="33.6" fill="#7d7679"/>
<rect x="1663.6" y="650.1" width="14.4" height="29.7" fill="#e5dee1"/>
<rect transform="translate(1678,648)" width="16" height="33.6" fill="url(#h)"/>
<rect x="1678" y="671.8" width="16" height="9.8" fill="#1e1e1e" opacity="0.3"/>
<rect x="1694" y="648.2" width="16" height="33.6" fill="#7d7679"/>
<rect x="1695.6" y="650.1" width="14.4" height="29.7" fill="#e5dee1"/>
<rect x="760" y="686.2" width="16" height="33.6" fill="#7d7679"/>
<rect x="761.6" y="688.1" width="14.4" height="29.7" fill="#e5dee1"/>
<rect transform="translate(776,686)" width="48" height="33.6" fill="url(#h)"/>
<rect x="776" y="709.8" width="48" height="9.8" fill="#1e1e1e" opacity="0.3"/>
<rect x="824" y="686.2" width="18" height="33.6" fill="#7d7679"/>
<rect x="825.6" y="688.1" width="16.4" height="29.7" fill="#e5dee1"/>
<rect transform="translate(842,686)" width="16" height="33.6" fill="url(#h)"/>
<rect x="842" y="709.8" width="16" height="9.8" fill="#1e1e1e" opacity="0.3"/>
<rect x="858" y="686.2" width="16" height="33.6" fill="#7d7679"/>
<rect x="859.6" y="688.1" width="14.4" height="29.7" fill="#e5dee1"/>
<rect transform="translate(874,686)" width="16" height="33.6" fill="url(#h)"/>
<rect x="874" y="709.8" width="16" height="9.8" fill="#1e1e1e" opacity="0.3"/>
<rect x="890" y="686.2" width="16" height="33.6" fill="#7d7679"/>
<rect x="891.6" y="688.1" width="14.4" height="29.7" fill="#e5dee1"/>
<rect transform="translate(906,686)" width="706" height="33.6" fill="url(#h)"/>
<rect x="906" y="709.8" width="706" height="9.8" fill="#1e1e1e" opacity="0.3"/>
<rect x="1612" y="686.2" width="16" height="33.6" fill="#7d7679"/>
<rect x="1613.6" y="688.1" width="14.4" height="29.7" fill="#e5dee1"/>
<rect transform="translate(1628,686)" width="16" height="33.6" fill="url(#h)"/>
<rect x="1628" y="709.8" width="16" height="9.8" fill="#1e1e1e" opacity="0.3"/>
<rect x="1644" y="686.2" width="18" height="33.6" fill="#7d7679"/>
<rect x="1645.6" y="688.1" width="16.4" height="29.7" fill="#e5dee1"/>
<rect transform="translate(1662,686)" width="16" height="33.6" fill="url(#h)"/>
<rect x="1662" y="709.8" width="16" height="9.8" fill="#1e1e1e" opacity="0.3"/>
<rect x="1678" y="686.2" width="16" height="33.6" fill="#7d7679"/>
<rect x="1679.6" y="688.1" width="14.4" height="29.7" fill="#e5dee1"/>
<rect transform="translate(1694,686)" width="76" height="33.6" fill="url(#h)"/>
<rect x="1694" y="709.8" width="76" height="9.8" fill="#1e1e1e" opacity="0.3"/>
<rect x="792" y="758" width="1110" height="36" fill="#aabfe3"/>
<rect x="792" y="758" width="1110" height="36" fill="url(#gb)"/>
<rect x="792" y="758" width="1.5" height="36" fill="#6f7480"/>
<rect x="924" y="758" width="1.5" height="36" fill="#6f7480"/>
<rect x="1710" y="758" width="1.5" height="36" fill="#6f7480"/>
<rect x="1842" y="758" width="1.5" height="36" fill="#6f7480"/>
<rect x="792" y="724.2" width="16" height="33.6" fill="#7d7679"/>
<rect x="793.6" y="726.1" width="14.4" height="29.7" fill="#e5dee1"/>
<rect transform="translate(808,724)" width="116" height="33.6" fill="url(#h)"/>
<rect x="808" y="747.8" width="116" height="9.8" fill="#1e1e1e" opacity="0.3"/>
<rect x="924" y="724.2" width="16" height="33.6" fill="#7d7679"/>
<rect x="925.6" y="726.1" width="14.4" height="29.7" fill="#e5dee1"/>
<rect transform="translate(940,724)" width="770" height="33.6" fill="url(#h)"/>
<rect x="940" y="747.8" width="770" height="9.8" fill="#1e1e1e" opacity="0.3"/>
<rect x="1710" y="724.2" width="16" height="33.6" fill="#7d7679"/>
<rect x="1711.6" y="726.1" width="14.4" height="29.7" fill="#e5dee1"/>
<rect transform="translate(1726,724)" width="116" height="33.6" fill="url(#h)"/>
<rect x="1726" y="747.8" width="116" height="9.8" fill="#1e1e1e" opacity="0.3"/>
<rect x="1842" y="724.2" width="16" height="33.6" fill="#7d7679"/>
<rect x="1843.6" y="726.1" width="14.4" height="29.7" fill="#e5dee1"/>
<rect transform="translate(1858,724)" width="44" height="33.6" fill="url(#h)"/>
<rect x="1858" y="747.8" width="44" height="9.8" fill="#1e1e1e" opacity="0.3"/>
<rect x="794" y="766.3" width="14" height="15.2" fill="#1a1a1c"/>
<rect x="926" y="766.3" width="14" height="15.2" fill="#1a1a1c"/>
<rect x="1712" y="766.3" width="14" height="15.2" fill="#1a1a1c"/>
<rect x="1844" y="766.3" width="14" height="15.2" fill="#1a1a1c"/>
<rect x="1464" y="832" width="110" height="36" fill="#aabfe3"/>
<rect x="1464" y="832" width="110" height="36" fill="url(#gb)"/>
<rect x="1464" y="832" width="1.5" height="36" fill="#6f7480"/>
<rect x="1498" y="832" width="1.5" height="36" fill="#6f7480"/>
<rect x="1464" y="798.2" width="16" height="33.6" fill="#7d7679"/>
<rect x="1465.6" y="800.1" width="14.4" height="29.7" fill="#e5dee1"/>
<rect transform="translate(1480,798)" width="18" height="33.6" fill="url(#h)"/>
<rect x="1480" y="821.8" width="18" height="9.8" fill="#1e1e1e" opacity="0.3"/>
<rect x="1498" y="798.2" width="16" height="33.6" fill="#7d7679"/>
<rect x="1499.6" y="800.1" width="14.4" height="29.7" fill="#e5dee1"/>
<rect transform="translate(1514,798)" width="60" height="33.6" fill="url(#h)"/>
<rect x="1514" y="821.8" width="60" height="9.8" fill="#1e1e1e" opacity="0.3"/>
<rect x="1466" y="840.3" width="13" height="15.2" fill="#1a1a1c"/>
<rect x="1470.2" y="840.3" width="0.8" height="15.2" fill="#2c2c30"/>
<rect x="1474.4" y="840.3" width="0.8" height="15.2" fill="#2c2c30"/>
<rect x="1500" y="840.3" width="13" height="15.2" fill="#1a1a1c"/>
<rect x="1504.2" y="840.3" width="0.8" height="15.2" fill="#2c2c30"/>
<rect x="1508.4" y="840.3" width="0.8" height="15.2" fill="#2c2c30"/>
<rect x="1530" y="906" width="122" height="36" fill="#aabfe3"/>
<rect x="1530" y="906" width="122" height="36" fill="url(#gb)"/>
<rect x="1530" y="906" width="1.5" height="36" fill="#6f7480"/>
<rect x="1530" y="872.2" width="62" height="33.6" fill="#7d7679"/>
<rect x="1531.6" y="874.1" width="60.4" height="29.7" fill="#e5dee1"/>
<rect transform="translate(1592,872)" width="60" height="33.6" fill="url(#h)"/>
<rect x="1592" y="895.8" width="60" height="9.8" fill="#1e1e1e" opacity="0.3"/>
<rect x="1532" y="914.3" width="60" height="15.2" fill="#1a1a1c"/>
<rect x="940" y="980" width="572" height="36" fill="#aabfe3"/>
<rect x="940" y="980" width="572" height="36" fill="url(#gb)"/>
<rect x="940" y="980" width="1.5" height="36" fill="#6f7480"/>
<rect x="1596" y="980" width="178" height="36" fill="#aabfe3"/>
<rect x="1596" y="980" width="178" height="36" fill="url(#gb)"/>
<rect x="1596" y="980" width="1.5" height="36" fill="#6f7480"/>
<rect x="940" y="946.2" width="524" height="33.6" fill="#7d7679"/>
<rect x="941.6" y="948.1" width="522.4" height="29.7" fill="#e5dee1"/>
<rect x="972" y="948.3" width="2" height="5.4" fill="#1b0f14"/>
<rect x="1006" y="948.3" width="2" height="5.4" fill="#1b0f14"/>
<rect x="1038" y="948.3" width="2" height="5.4" fill="#1b0f14"/>
<rect x="1070" y="948.3" width="2" height="5.4" fill="#1b0f14"/>
<rect x="1104" y="948.3" width="2" height="5.4" fill="#1b0f14"/>
<rect x="1136" y="948.3" width="2" height="5.4" fill="#1b0f14"/>
<rect x="1170" y="948.3" width="2" height="5.4" fill="#1b0f14"/>
<rect x="1202" y="948.3" width="2" height="5.4" fill="#1b0f14"/>
<rect x="1234" y="948.3" width="2" height="5.4" fill="#1b0f14"/>
<rect x="1268" y="948.3" width="2" height="5.4" fill="#1b0f14"/>
<rect x="1300" y="948.3" width="2" height="5.4" fill="#1b0f14"/>
<rect x="1334" y="948.3" width="2" height="5.4" fill="#1b0f14"/>
<rect x="1366" y="948.3" width="2" height="5.4" fill="#1b0f14"/>
<rect x="1398" y="948.3" width="2" height="5.4" fill="#1b0f14"/>
<rect x="1432" y="948.3" width="2" height="5.4" fill="#1b0f14"/>
<rect transform="translate(1464,946)" width="48" height="33.6" fill="url(#h)"/>
<rect x="1464" y="969.8" width="48" height="9.8" fill="#1e1e1e" opacity="0.3"/>
<rect x="1596" y="946.2" width="130" height="33.6" fill="#7d7679"/>
<rect x="1597.6" y="948.1" width="128.4" height="29.7" fill="#e5dee1"/>
<rect x="1628" y="948.3" width="2" height="5.4" fill="#1b0f14"/>
<rect x="1662" y="948.3" width="2" height="5.4" fill="#1b0f14"/>
<rect x="1694" y="948.3" width="2" height="5.4" fill="#1b0f14"/>
<rect transform="translate(1726,946)" width="48" height="33.6" fill="url(#h)"/>
<rect x="1726" y="969.8" width="48" height="9.8" fill="#1e1e1e" opacity="0.3"/>
<rect x="951.2" y="1010.4" width="1.7" height="1.7" fill="#1b0f14"/>
<rect x="985.2" y="1010.4" width="1.7" height="1.7" fill="#1b0f14"/>
<rect x="972" y="1010.4" width="2" height="5.6" fill="#1b0f14"/>
<rect x="1017.2" y="1010.4" width="1.7" height="1.7" fill="#1b0f14"/>
<rect x="1006" y="1010.4" width="2" height="5.6" fill="#1b0f14"/>
<rect x="1051.2" y="1010.4" width="1.7" height="1.7" fill="#1b0f14"/>
<rect x="1038" y="1010.4" width="2" height="5.6" fill="#1b0f14"/>
<rect x="1083.2" y="1010.4" width="1.7" height="1.7" fill="#1b0f14"/>
<rect x="1070" y="1010.4" width="2" height="5.6" fill="#1b0f14"/>
<rect x="1115.2" y="1010.4" width="1.7" height="1.7" fill="#1b0f14"/>
<rect x="1104" y="1010.4" width="2" height="5.6" fill="#1b0f14"/>
<rect x="1149.2" y="1010.4" width="1.7" height="1.7" fill="#1b0f14"/>
<rect x="1136" y="1010.4" width="2" height="5.6" fill="#1b0f14"/>
<rect x="1181.2" y="1010.4" width="1.7" height="1.7" fill="#1b0f14"/>
<rect x="1170" y="1010.4" width="2" height="5.6" fill="#1b0f14"/>
<rect x="1215.2" y="1010.4" width="1.7" height="1.7" fill="#1b0f14"/>
<rect x="1202" y="1010.4" width="2" height="5.6" fill="#1b0f14"/>
<rect x="1247.2" y="1010.4" width="1.7" height="1.7" fill="#1b0f14"/>
<rect x="1234" y="1010.4" width="2" height="5.6" fill="#1b0f14"/>
<rect x="1279.2" y="1010.4" width="1.7" height="1.7" fill="#1b0f14"/>
<rect x="1268" y="1010.4" width="2" height="5.6" fill="#1b0f14"/>
<rect x="1313.2" y="1010.4" width="1.7" height="1.7" fill="#1b0f14"/>
<rect x="1300" y="1010.4" width="2" height="5.6" fill="#1b0f14"/>
<rect x="1345.2" y="1010.4" width="1.7" height="1.7" fill="#1b0f14"/>
<rect x="1334" y="1010.4" width="2" height="5.6" fill="#1b0f14"/>
<rect x="1379.2" y="1010.4" width="1.7" height="1.7" fill="#1b0f14"/>
<rect x="1366" y="1010.4" width="2" height="5.6" fill="#1b0f14"/>
<rect x="1411.2" y="1010.4" width="1.7" height="1.7" fill="#1b0f14"/>
<rect x="1398" y="1010.4" width="2" height="5.6" fill="#1b0f14"/>
<rect x="1443.2" y="1010.4" width="1.7" height="1.7" fill="#1b0f14"/>
<rect x="1432" y="1010.4" width="2" height="5.6" fill="#1b0f14"/>
<rect x="1607.2" y="1010.4" width="1.7" height="1.7" fill="#1b0f14"/>
<rect x="1641.2" y="1010.4" width="1.7" height="1.7" fill="#1b0f14"/>
<rect x="1628" y="1010.4" width="2" height="5.6" fill="#1b0f14"/>
<rect x="1673.2" y="1010.4" width="1.7" height="1.7" fill="#1b0f14"/>
<rect x="1662" y="1010.4" width="2" height="5.6" fill="#1b0f14"/>
<rect x="1707.2" y="1010.4" width="1.7" height="1.7" fill="#1b0f14"/>
<rect x="1694" y="1010.4" width="2" height="5.6" fill="#1b0f14"/>
<rect x="874" y="1054" width="1266" height="36" fill="#aabfe3"/>
<rect x="874" y="1054" width="1266" height="36" fill="url(#gb)"/>
<rect x="874" y="1054" width="1.5" height="36" fill="#6f7480"/>
<rect x="1596" y="1054" width="1.5" height="36" fill="#6f7480"/>
<rect x="874" y="1020.2" width="590" height="33.6" fill="#7d7679"/>
<rect x="875.6" y="1022.1" width="588.4" height="29.7" fill="#e5dee1"/>
<rect x="890" y="1022.3" width="2" height="5.4" fill="#1b0f14"/>
<rect x="906" y="1022.3" width="2" height="5.4" fill="#1b0f14"/>
<rect x="924" y="1022.3" width="2" height="5.4" fill="#1b0f14"/>
<rect x="940" y="1022.3" width="2" height="5.4" fill="#1b0f14"/>
<rect x="956" y="1022.3" width="2" height="5.4" fill="#1b0f14"/>
<rect x="972" y="1022.3" width="2" height="5.4" fill="#1b0f14"/>
<rect x="988" y="1022.3" width="2" height="5.4" fill="#1b0f14"/>
<rect x="1006" y="1022.3" width="2" height="5.4" fill="#1b0f14"/>
<rect x="1022" y="1022.3" width="2" height="5.4" fill="#1b0f14"/>
<rect x="1038" y="1022.3" width="2" height="5.4" fill="#1b0f14"/>
<rect x="1054" y="1022.3" width="2" height="5.4" fill="#1b0f14"/>
<rect x="1070" y="1022.3" width="2" height="5.4" fill="#1b0f14"/>
<rect x="1088" y="1022.3" width="2" height="5.4" fill="#1b0f14"/>
<rect x="1104" y="1022.3" width="2" height="5.4" fill="#1b0f14"/>
<rect x="1120" y="1022.3" width="2" height="5.4" fill="#1b0f14"/>
<rect x="1136" y="1022.3" width="2" height="5.4" fill="#1b0f14"/>
<rect x="1152" y="1022.3" width="2" height="5.4" fill="#1b0f14"/>
<rect x="1170" y="1022.3" width="2" height="5.4" fill="#1b0f14"/>
<rect x="1186" y="1022.3" width="2" height="5.4" fill="#1b0f14"/>
<rect x="1202" y="1022.3" width="2" height="5.4" fill="#1b0f14"/>
<rect x="1218" y="1022.3" width="2" height="5.4" fill="#1b0f14"/>
<rect x="1234" y="1022.3" width="2" height="5.4" fill="#1b0f14"/>
<rect x="1252" y="1022.3" width="2" height="5.4" fill="#1b0f14"/>
<rect x="1268" y="1022.3" width="2" height="5.4" fill="#1b0f14"/>
<rect x="1284" y="1022.3" width="2" height="5.4" fill="#1b0f14"/>
<rect x="1300" y="1022.3" width="2" height="5.4" fill="#1b0f14"/>
<rect x="1316" y="1022.3" width="2" height="5.4" fill="#1b0f14"/>
<rect x="1334" y="1022.3" width="2" height="5.4" fill="#1b0f14"/>
<rect x="1350" y="1022.3" width="2" height="5.4" fill="#1b0f14"/>
<rect x="1366" y="1022.3" width="2" height="5.4" fill="#1b0f14"/>
<rect x="1382" y="1022.3" width="2" height="5.4" fill="#1b0f14"/>
<rect x="1398" y="1022.3" width="2" height="5.4" fill="#1b0f14"/>
<rect x="1416" y="1022.3" width="2" height="5.4" fill="#1b0f14"/>
<rect x="1432" y="1022.3" width="2" height="5.4" fill="#1b0f14"/>
<rect x="1448" y="1022.3" width="2" height="5.4" fill="#1b0f14"/>
<rect transform="translate(1464,1020)" width="132" height="33.6" fill="url(#h)"/>
<rect x="1464" y="1043.8" width="132" height="9.8" fill="#1e1e1e" opacity="0.3"/>
<rect x="1596" y="1020.2" width="524" height="33.6" fill="#7d7679"/>
<rect x="1597.6" y="1022.1" width="522.4" height="29.7" fill="#e5dee1"/>
<rect x="1612" y="1022.3" width="2" height="5.4" fill="#1b0f14"/>
<rect x="1628" y="1022.3" width="2" height="5.4" fill="#1b0f14"/>
<rect x="1644" y="1022.3" width="2" height="5.4" fill="#1b0f14"/>
<rect x="1662" y="1022.3" width="2" height="5.4" fill="#1b0f14"/>
<rect x="1678" y="1022.3" width="2" height="5.4" fill="#1b0f14"/>
<rect x="1694" y="1022.3" width="2" height="5.4" fill="#1b0f14"/>
<rect x="1710" y="1022.3" width="2" height="5.4" fill="#1b0f14"/>
<rect x="1726" y="1022.3" width="2" height="5.4" fill="#1b0f14"/>
<rect x="1744" y="1022.3" width="2" height="5.4" fill="#1b0f14"/>
<rect x="1760" y="1022.3" width="2" height="5.4" fill="#1b0f14"/>
<rect x="1776" y="1022.3" width="2" height="5.4" fill="#1b0f14"/>
<rect x="1792" y="1022.3" width="2" height="5.4" fill="#1b0f14"/>
<rect x="1808" y="1022.3" width="2" height="5.4" fill="#1b0f14"/>
<rect x="1826" y="1022.3" width="2" height="5.4" fill="#1b0f14"/>
<rect x="1842" y="1022.3" width="2" height="5.4" fill="#1b0f14"/>
<rect x="1858" y="1022.3" width="2" height="5.4" fill="#1b0f14"/>
<rect x="1874" y="1022.3" width="2" height="5.4" fill="#1b0f14"/>
<rect x="1890" y="1022.3" width="2" height="5.4" fill="#1b0f14"/>
<rect x="1908" y="1022.3" width="2" height="5.4" fill="#1b0f14"/>
<rect x="1924" y="1022.3" width="2" height="5.4" fill="#1b0f14"/>
<rect x="1940" y="1022.3" width="2" height="5.4" fill="#1b0f14"/>
<rect x="1956" y="1022.3" width="2" height="5.4" fill="#1b0f14"/>
<rect x="1972" y="1022.3" width="2" height="5.4" fill="#1b0f14"/>
<rect x="1990" y="1022.3" width="2" height="5.4" fill="#1b0f14"/>
<rect x="2006" y="1022.3" width="2" height="5.4" fill="#1b0f14"/>
<rect x="2022" y="1022.3" width="2" height="5.4" fill="#1b0f14"/>
<rect x="2038" y="1022.3" width="2" height="5.4" fill="#1b0f14"/>
<rect x="2054" y="1022.3" width="2" height="5.4" fill="#1b0f14"/>
<rect x="2072" y="1022.3" width="2" height="5.4" fill="#1b0f14"/>
<rect x="2088" y="1022.3" width="2" height="5.4" fill="#1b0f14"/>
<rect x="2104" y="1022.3" width="2" height="5.4" fill="#1b0f14"/>
<rect transform="translate(2120,1020)" width="20" height="33.6" fill="url(#h)"/>
<rect x="2120" y="1043.8" width="20" height="9.8" fill="#1e1e1e" opacity="0.3"/>
<rect x="876" y="1054" width="588" height="36" fill="url(#sp)"/>
<rect x="890" y="1084" width="2" height="6" fill="#1b0f14"/>
<rect x="906" y="1084" width="2" height="6" fill="#1b0f14"/>
<rect x="924" y="1084" width="2" height="6" fill="#1b0f14"/>
<rect x="940" y="1084" width="2" height="6" fill="#1b0f14"/>
<rect x="956" y="1084" width="2" height="6" fill="#1b0f14"/>
<rect x="972" y="1084" width="2" height="6" fill="#1b0f14"/>
<rect x="988" y="1084" width="2" height="6" fill="#1b0f14"/>
<rect x="1006" y="1084" width="2" height="6" fill="#1b0f14"/>
<rect x="1022" y="1084" width="2" height="6" fill="#1b0f14"/>
<rect x="1038" y="1084" width="2" height="6" fill="#1b0f14"/>
<rect x="1054" y="1084" width="2" height="6" fill="#1b0f14"/>
<rect x="1070" y="1084" width="2" height="6" fill="#1b0f14"/>
<rect x="1088" y="1084" width="2" height="6" fill="#1b0f14"/>
<rect x="1104" y="1084" width="2" height="6" fill="#1b0f14"/>
<rect x="1120" y="1084" width="2" height="6" fill="#1b0f14"/>
<rect x="1136" y="1084" width="2" height="6" fill="#1b0f14"/>
<rect x="1152" y="1084" width="2" height="6" fill="#1b0f14"/>
<rect x="1170" y="1084" width="2" height="6" fill="#1b0f14"/>
<rect x="1186" y="1084" width="2" height="6" fill="#1b0f14"/>
<rect x="1202" y="1084" width="2" height="6" fill="#1b0f14"/>
<rect x="1218" y="1084" width="2" height="6" fill="#1b0f14"/>
<rect x="1234" y="1084" width="2" height="6" fill="#1b0f14"/>
<rect x="1252" y="1084" width="2" height="6" fill="#1b0f14"/>
<rect x="1268" y="1084" width="2" height="6" fill="#1b0f14"/>
<rect x="1284" y="1084" width="2" height="6" fill="#1b0f14"/>
<rect x="1300" y="1084" width="2" height="6" fill="#1b0f14"/>
<rect x="1316" y="1084" width="2" height="6" fill="#1b0f14"/>
<rect x="1334" y="1084" width="2" height="6" fill="#1b0f14"/>
<rect x="1350" y="1084" width="2" height="6" fill="#1b0f14"/>
<rect x="1366" y="1084" width="2" height="6" fill="#1b0f14"/>
<rect x="1382" y="1084" width="2" height="6" fill="#1b0f14"/>
<rect x="1398" y="1084" width="2" height="6" fill="#1b0f14"/>
<rect x="1416" y="1084" width="2" height="6" fill="#1b0f14"/>
<rect x="1432" y="1084" width="2" height="6" fill="#1b0f14"/>
<rect x="1448" y="1084" width="2" height="6" fill="#1b0f14"/>
<rect x="1598" y="1054" width="522" height="36" fill="url(#sp)"/>
<rect x="1612" y="1084" width="2" height="6" fill="#1b0f14"/>
<rect x="1628" y="1084" width="2" height="6" fill="#1b0f14"/>
<rect x="1644" y="1084" width="2" height="6" fill="#1b0f14"/>
<rect x="1662" y="1084" width="2" height="6" fill="#1b0f14"/>
<rect x="1678" y="1084" width="2" height="6" fill="#1b0f14"/>
<rect x="1694" y="1084" width="2" height="6" fill="#1b0f14"/>
<rect x="1710" y="1084" width="2" height="6" fill="#1b0f14"/>
<rect x="1726" y="1084" width="2" height="6" fill="#1b0f14"/>
<rect x="1744" y="1084" width="2" height="6" fill="#1b0f14"/>
<rect x="1760" y="1084" width="2" height="6" fill="#1b0f14"/>
<rect x="1776" y="1084" width="2" height="6" fill="#1b0f14"/>
<rect x="1792" y="1084" width="2" height="6" fill="#1b0f14"/>
<rect x="1808" y="1084" width="2" height="6" fill="#1b0f14"/>
<rect x="1826" y="1084" width="2" height="6" fill="#1b0f14"/>
<rect x="1842" y="1084" width="2" height="6" fill="#1b0f14"/>
<rect x="1858" y="1084" width="2" height="6" fill="#1b0f14"/>
<rect x="1874" y="1084" width="2" height="6" fill="#1b0f14"/>
<rect x="1890" y="1084" width="2" height="6" fill="#1b0f14"/>
<rect x="1908" y="1084" width="2" height="6" fill="#1b0f14"/>
<rect x="1924" y="1084" width="2" height="6" fill="#1b0f14"/>
<rect x="1940" y="1084" width="2" height="6" fill="#1b0f14"/>
<rect x="1956" y="1084" width="2" height="6" fill="#1b0f14"/>
<rect x="1972" y="1084" width="2" height="6" fill="#1b0f14"/>
<rect x="1990" y="1084" width="2" height="6" fill="#1b0f14"/>
<rect x="2006" y="1084" width="2" height="6" fill="#1b0f14"/>
<rect x="2022" y="1084" width="2" height="6" fill="#1b0f14"/>
<rect x="2038" y="1084" width="2" height="6" fill="#1b0f14"/>
<rect x="2054" y="1084" width="2" height="6" fill="#1b0f14"/>
<rect x="2072" y="1084" width="2" height="6" fill="#1b0f14"/>
<rect x="2088" y="1084" width="2" height="6" fill="#1b0f14"/>
<rect x="2104" y="1084" width="2" height="6" fill="#1b0f14"/>
<rect x="1070" y="1128" width="406" height="36" fill="#aabfe3"/>
<rect x="1070" y="1128" width="406" height="36" fill="url(#gb)"/>
<rect x="1070" y="1128" width="1.5" height="36" fill="#6f7480"/>
<rect x="1070" y="1094.2" width="394" height="33.6" fill="#7d7679"/>
<rect x="1071.6" y="1096.1" width="392.4" height="29.7" fill="#e5dee1"/>
<rect transform="translate(1464,1094)" width="12" height="33.6" fill="url(#h)"/>
<rect x="1464" y="1117.8" width="12" height="9.8" fill="#1e1e1e" opacity="0.3"/>
<rect x="1072" y="1136.3" width="392" height="15.2" fill="#1a1a1c"/>
<rect x="1070" y="1202" width="474" height="36" fill="#aabfe3"/>
<rect x="1070" y="1202" width="474" height="36" fill="url(#gb)"/>
<rect x="1070" y="1202" width="1.5" height="36" fill="#6f7480"/>
<rect x="1070" y="1168.2" width="394" height="33.6" fill="#7d7679"/>
<rect x="1071.6" y="1170.1" width="392.4" height="29.7" fill="#e5dee1"/>
<rect transform="translate(1464,1168)" width="80" height="33.6" fill="url(#h)"/>
<rect x="1464" y="1191.8" width="80" height="9.8" fill="#1e1e1e" opacity="0.3"/>
<rect x="1072" y="1210.3" width="392" height="15.2" fill="#1a1a1c"/>
<rect x="414" y="393" width="198" height="7.6" fill="#000" opacity="0.11"/>
<rect x="612" y="393" width="16" height="7.6" fill="#000" opacity="0.11"/>
<rect x="644" y="393" width="16" height="7.6" fill="#000" opacity="0.11"/>
<rect x="678" y="393" width="16" height="7.6" fill="#000" opacity="0.11"/>
<rect x="710" y="393" width="16" height="7.6" fill="#000" opacity="0.11"/>
<rect x="742" y="393" width="18" height="7.6" fill="#000" opacity="0.11"/>
<rect x="776" y="393" width="16" height="7.6" fill="#000" opacity="0.11"/>
<rect x="808" y="393" width="16" height="7.6" fill="#000" opacity="0.11"/>
<rect x="842" y="393" width="16" height="7.6" fill="#000" opacity="0.11"/>
<rect x="874" y="393" width="16" height="7.6" fill="#000" opacity="0.11"/>
<rect x="906" y="393" width="18" height="7.6" fill="#000" opacity="0.11"/>
<rect x="940" y="393" width="130" height="7.6" fill="#000" opacity="0.11"/>
<rect x="1334" y="393" width="130" height="7.6" fill="#000" opacity="0.11"/>
<rect x="1596" y="393" width="16" height="7.6" fill="#000" opacity="0.11"/>
<rect x="1628" y="393" width="16" height="7.6" fill="#000" opacity="0.11"/>
<rect x="1662" y="393" width="16" height="7.6" fill="#000" opacity="0.11"/>
<rect x="1694" y="393" width="16" height="7.6" fill="#000" opacity="0.11"/>
<rect x="1726" y="393" width="132" height="7.6" fill="#000" opacity="0.11"/>
<rect x="612" y="402.4" width="16" height="7.6" fill="#000" opacity="0.11"/>
<rect x="644" y="402.4" width="16" height="7.6" fill="#000" opacity="0.11"/>
<rect x="678" y="402.4" width="16" height="7.6" fill="#000" opacity="0.11"/>
<rect x="710" y="402.4" width="16" height="7.6" fill="#000" opacity="0.11"/>
<rect x="742" y="402.4" width="18" height="7.6" fill="#000" opacity="0.11"/>
<rect x="776" y="402.4" width="16" height="7.6" fill="#000" opacity="0.11"/>
<rect x="808" y="402.4" width="16" height="7.6" fill="#000" opacity="0.11"/>
<rect x="842" y="402.4" width="16" height="7.6" fill="#000" opacity="0.11"/>
<rect x="874" y="402.4" width="16" height="7.6" fill="#000" opacity="0.11"/>
<rect x="906" y="402.4" width="18" height="7.6" fill="#000" opacity="0.11"/>
<rect x="1596" y="402.4" width="16" height="7.6" fill="#000" opacity="0.11"/>
<rect x="1628" y="402.4" width="16" height="7.6" fill="#000" opacity="0.11"/>
<rect x="1662" y="402.4" width="16" height="7.6" fill="#000" opacity="0.11"/>
<rect x="1694" y="402.4" width="16" height="7.6" fill="#000" opacity="0.11"/>
<rect x="612" y="411.8" width="16" height="7.6" fill="#000" opacity="0.11"/>
<rect x="644" y="411.8" width="16" height="7.6" fill="#000" opacity="0.11"/>
<rect x="678" y="411.8" width="16" height="7.6" fill="#000" opacity="0.11"/>
<rect x="710" y="411.8" width="16" height="7.6" fill="#000" opacity="0.11"/>
<rect x="742" y="411.8" width="18" height="7.6" fill="#000" opacity="0.11"/>
<rect x="776" y="411.8" width="16" height="7.6" fill="#000" opacity="0.11"/>
<rect x="808" y="411.8" width="16" height="7.6" fill="#000" opacity="0.11"/>
<rect x="842" y="411.8" width="16" height="7.6" fill="#000" opacity="0.11"/>
<rect x="874" y="411.8" width="16" height="7.6" fill="#000" opacity="0.11"/>
<rect x="906" y="411.8" width="18" height="7.6" fill="#000" opacity="0.11"/>
<rect x="1596" y="411.8" width="16" height="7.6" fill="#000" opacity="0.11"/>
<rect x="1628" y="411.8" width="16" height="7.6" fill="#000" opacity="0.11"/>
<rect x="1662" y="411.8" width="16" height="7.6" fill="#000" opacity="0.11"/>
<rect x="1694" y="411.8" width="16" height="7.6" fill="#000" opacity="0.11"/>
<rect x="760" y="421.2" width="16" height="7.6" fill="#000" opacity="0.11"/>
<rect x="824" y="421.2" width="18" height="7.6" fill="#000" opacity="0.11"/>
<rect x="858" y="421.2" width="16" height="7.6" fill="#000" opacity="0.11"/>
<rect x="890" y="421.2" width="16" height="7.6" fill="#000" opacity="0.11"/>
<rect x="1612" y="421.2" width="16" height="7.6" fill="#000" opacity="0.11"/>
<rect x="1644" y="421.2" width="18" height="7.6" fill="#000" opacity="0.11"/>
<rect x="1678" y="421.2" width="16" height="7.6" fill="#000" opacity="0.11"/>
<rect x="792" y="430.6" width="16" height="7.6" fill="#000" opacity="0.11"/>
<rect x="924" y="430.6" width="16" height="7.6" fill="#000" opacity="0.11"/>
<rect x="1710" y="430.6" width="16" height="7.6" fill="#000" opacity="0.11"/>
<rect x="1842" y="430.6" width="16" height="7.6" fill="#000" opacity="0.11"/>
<rect x="1464" y="440" width="16" height="7.6" fill="#000" opacity="0.11"/>
<rect x="1498" y="440" width="16" height="7.6" fill="#000" opacity="0.11"/>
<rect x="1530" y="449.4" width="62" height="7.6" fill="#000" opacity="0.11"/>
<rect x="940" y="458.8" width="524" height="7.6" fill="#000" opacity="0.11"/>
<rect x="1596" y="458.8" width="130" height="7.6" fill="#000" opacity="0.11"/>
<rect x="874" y="468.2" width="590" height="7.6" fill="#000" opacity="0.11"/>
<rect x="1596" y="468.2" width="524" height="7.6" fill="#000" opacity="0.11"/>
<rect x="1070" y="477.6" width="394" height="7.6" fill="#000" opacity="0.11"/>
<rect x="1070" y="487" width="394" height="7.6" fill="#000" opacity="0.11"/>
<rect x="414" y="1243.5" width="198" height="9.4" fill="#000" opacity="0.11"/>
<rect x="874" y="1243.5" width="66" height="9.4" fill="#000" opacity="0.11"/>
<rect x="1202" y="1243.5" width="262" height="9.4" fill="#000" opacity="0.11"/>
<rect x="1792" y="1243.5" width="66" height="9.4" fill="#000" opacity="0.11"/>
<rect x="546" y="1253.9" width="66" height="9.4" fill="#000" opacity="0.11"/>
<rect x="1334" y="1253.9" width="130" height="9.4" fill="#000" opacity="0.11"/>
<rect x="1792" y="1253.9" width="66" height="9.4" fill="#000" opacity="0.11"/>
<rect x="284" y="1274.7" width="66" height="9.4" fill="#000" opacity="0.11"/>
<rect x="414" y="1274.7" width="66" height="9.4" fill="#000" opacity="0.11"/>
<rect x="874" y="1274.7" width="66" height="9.4" fill="#000" opacity="0.11"/>
<rect x="1464" y="1274.7" width="66" height="9.4" fill="#000" opacity="0.11"/>
<rect x="1596" y="1274.7" width="66" height="9.4" fill="#000" opacity="0.11"/>
<rect x="1726" y="1274.7" width="66" height="9.4" fill="#000" opacity="0.11"/>
<rect x="1858" y="1274.7" width="66" height="9.4" fill="#000" opacity="0.11"/>
<rect x="268" y="1285.1" width="16" height="9.4" fill="#000" opacity="0.11"/>
<rect x="350" y="1285.1" width="64" height="9.4" fill="#000" opacity="0.11"/>
<rect x="1006" y="1285.1" width="64" height="9.4" fill="#000" opacity="0.11"/>
<rect x="1526" y="1285.1" width="64" height="9.4" fill="#000" opacity="0.11"/>
<rect x="414" y="1350.6" width="198" height="33" fill="#8c8c8c"/>
<rect x="415.8" y="1352.4" width="196.2" height="29.4" fill="#ffffff"/>
<rect x="414" y="1383.6" width="199.5" height="2.4" fill="#aabfe3"/>
<rect x="874" y="1350.6" width="66" height="33" fill="#8c8c8c"/>
<rect x="875.8" y="1352.4" width="64.2" height="29.4" fill="#ffffff"/>
<rect x="874" y="1383.6" width="67.5" height="2.4" fill="#aabfe3"/>
<rect x="1202" y="1350.6" width="262" height="33" fill="#8c8c8c"/>
<rect x="1203.8" y="1352.4" width="260.2" height="29.4" fill="#ffffff"/>
<rect x="1202" y="1383.6" width="263.5" height="2.4" fill="#aabfe3"/>
<rect x="1792" y="1350.6" width="66" height="33" fill="#8c8c8c"/>
<rect x="1793.8" y="1352.4" width="64.2" height="29.4" fill="#ffffff"/>
<rect x="1792" y="1383.6" width="67.5" height="2.4" fill="#aabfe3"/>
<rect x="20" y="54.3" width="2380.4" height="21.9" fill="#999999"/>
<rect x="22" y="56.2" width="2376.4" height="18" fill="#5e5e5e"/>
<path d="M22 56.2L36.8 65.2L22 74.2Z" fill="#595959" stroke="#999999" stroke-width="1.6" stroke-linejoin="miter"/>
<path d="M2398.4 56.2L2383.6 65.2L2398.4 74.2Z" fill="#595959" stroke="#999999" stroke-width="1.6" stroke-linejoin="miter"/>
<rect x="20" y="54.3" width="2" height="1375.7" fill="#999999"/>
<rect x="2398.4" y="54.3" width="2" height="1375.7" fill="#999999"/>
<rect x="22" y="42.2" width="1.8" height="12.1" fill="#8c8c8c"/>
<rect x="22" y="42.2" width="4" height="1.6" fill="#8c8c8c"/>
<rect x="86" y="52" width="1.8" height="2.3" fill="#8c8c8c"/>
<rect x="152" y="42.2" width="1.8" height="12.1" fill="#8c8c8c"/>
<rect x="152" y="42.2" width="4" height="1.6" fill="#8c8c8c"/>
<rect x="218" y="52" width="1.8" height="2.3" fill="#8c8c8c"/>
<rect x="284" y="42.2" width="1.8" height="12.1" fill="#8c8c8c"/>
<rect x="284" y="42.2" width="4" height="1.6" fill="#8c8c8c"/>
<rect x="350" y="52" width="1.8" height="2.3" fill="#8c8c8c"/>
<rect x="414" y="42.2" width="1.8" height="12.1" fill="#8c8c8c"/>
<rect x="414" y="42.2" width="4" height="1.6" fill="#8c8c8c"/>
<rect x="480" y="52" width="1.8" height="2.3" fill="#8c8c8c"/>
<rect x="546" y="42.2" width="1.8" height="12.1" fill="#8c8c8c"/>
<rect x="546" y="42.2" width="4" height="1.6" fill="#8c8c8c"/>
<rect x="612" y="52" width="1.8" height="2.3" fill="#8c8c8c"/>
<rect x="678" y="42.2" width="1.8" height="12.1" fill="#8c8c8c"/>
<rect x="678" y="42.2" width="4" height="1.6" fill="#8c8c8c"/>
<rect x="742" y="52" width="1.8" height="2.3" fill="#8c8c8c"/>
<rect x="808" y="42.2" width="1.8" height="12.1" fill="#8c8c8c"/>
<rect x="808" y="42.2" width="4" height="1.6" fill="#8c8c8c"/>
<rect x="874" y="52" width="1.8" height="2.3" fill="#8c8c8c"/>
<rect x="940" y="42.2" width="1.8" height="12.1" fill="#8c8c8c"/>
<rect x="940" y="42.2" width="4" height="1.6" fill="#8c8c8c"/>
<rect x="1006" y="52" width="1.8" height="2.3" fill="#8c8c8c"/>
<rect x="1070" y="42.2" width="1.8" height="12.1" fill="#8c8c8c"/>
<rect x="1070" y="42.2" width="4" height="1.6" fill="#8c8c8c"/>
<rect x="1136" y="52" width="1.8" height="2.3" fill="#8c8c8c"/>
<rect x="1202" y="42.2" width="1.8" height="12.1" fill="#8c8c8c"/>
<rect x="1202" y="42.2" width="4" height="1.6" fill="#8c8c8c"/>
<rect x="1268" y="52" width="1.8" height="2.3" fill="#8c8c8c"/>
<rect x="1334" y="42.2" width="1.8" height="12.1" fill="#8c8c8c"/>
<rect x="1334" y="42.2" width="4" height="1.6" fill="#8c8c8c"/>
<rect x="1398" y="52" width="1.8" height="2.3" fill="#8c8c8c"/>
<rect x="1464" y="42.2" width="1.8" height="12.1" fill="#8c8c8c"/>
<rect x="1464" y="42.2" width="4" height="1.6" fill="#8c8c8c"/>
<rect x="1530" y="52" width="1.8" height="2.3" fill="#8c8c8c"/>
<rect x="1596" y="42.2" width="1.8" height="12.1" fill="#8c8c8c"/>
<rect x="1596" y="42.2" width="4" height="1.6" fill="#8c8c8c"/>
<rect x="1662" y="52" width="1.8" height="2.3" fill="#8c8c8c"/>
<rect x="1726" y="42.2" width="1.8" height="12.1" fill="#8c8c8c"/>
<rect x="1726" y="42.2" width="4" height="1.6" fill="#8c8c8c"/>
<rect x="1792" y="52" width="1.8" height="2.3" fill="#8c8c8c"/>
<rect x="1858" y="42.2" width="1.8" height="12.1" fill="#8c8c8c"/>
<rect x="1858" y="42.2" width="4" height="1.6" fill="#8c8c8c"/>
<rect x="1924" y="52" width="1.8" height="2.3" fill="#8c8c8c"/>
<rect x="1990" y="42.2" width="1.8" height="12.1" fill="#8c8c8c"/>
<rect x="1990" y="42.2" width="4" height="1.6" fill="#8c8c8c"/>
<rect x="2054" y="52" width="1.8" height="2.3" fill="#8c8c8c"/>
<rect x="2120" y="42.2" width="1.8" height="12.1" fill="#8c8c8c"/>
<rect x="2120" y="42.2" width="4" height="1.6" fill="#8c8c8c"/>
<rect x="2186" y="52" width="1.8" height="2.3" fill="#8c8c8c"/>
<rect x="2252" y="42.2" width="1.8" height="12.1" fill="#8c8c8c"/>
<rect x="2252" y="42.2" width="4" height="1.6" fill="#8c8c8c"/>
<rect x="2318" y="52" width="1.8" height="2.3" fill="#8c8c8c"/>
<rect x="2382" y="42.2" width="1.8" height="12.1" fill="#8c8c8c"/>
<rect x="22" y="1430" width="1.8" height="3.6" fill="#8c8c8c"/>
<rect x="64" y="1430" width="1.8" height="15.8" fill="#8c8c8c"/>
<rect x="64" y="1444.2" width="4" height="1.6" fill="#8c8c8c"/>
<rect x="108" y="1430" width="1.8" height="3.6" fill="#8c8c8c"/>
<rect x="152" y="1430" width="1.8" height="3.6" fill="#8c8c8c"/>
<rect x="196" y="1430" width="1.8" height="3.6" fill="#8c8c8c"/>
<rect x="240" y="1430" width="1.8" height="15.8" fill="#8c8c8c"/>
<rect x="240" y="1444.2" width="4" height="1.6" fill="#8c8c8c"/>
<rect x="284" y="1430" width="1.8" height="3.6" fill="#8c8c8c"/>
<rect x="328" y="1430" width="1.8" height="3.6" fill="#8c8c8c"/>
<rect x="372" y="1430" width="1.8" height="3.6" fill="#8c8c8c"/>
<rect x="414" y="1430" width="1.8" height="15.8" fill="#8c8c8c"/>
<rect x="414" y="1444.2" width="4" height="1.6" fill="#8c8c8c"/>
<rect x="458" y="1430" width="1.8" height="3.6" fill="#8c8c8c"/>
<rect x="502" y="1430" width="1.8" height="3.6" fill="#8c8c8c"/>
<rect x="546" y="1430" width="1.8" height="3.6" fill="#8c8c8c"/>
<rect x="590" y="1430" width="1.8" height="15.8" fill="#8c8c8c"/>
<rect x="590" y="1444.2" width="4" height="1.6" fill="#8c8c8c"/>
<rect x="634" y="1430" width="1.8" height="3.6" fill="#8c8c8c"/>
<rect x="678" y="1430" width="1.8" height="3.6" fill="#8c8c8c"/>
<rect x="720" y="1430" width="1.8" height="3.6" fill="#8c8c8c"/>
<rect x="764" y="1430" width="1.8" height="15.8" fill="#8c8c8c"/>
<rect x="764" y="1444.2" width="4" height="1.6" fill="#8c8c8c"/>
<rect x="808" y="1430" width="1.8" height="3.6" fill="#8c8c8c"/>
<rect x="852" y="1430" width="1.8" height="3.6" fill="#8c8c8c"/>
<rect x="896" y="1430" width="1.8" height="3.6" fill="#8c8c8c"/>
<rect x="940" y="1430" width="1.8" height="15.8" fill="#8c8c8c"/>
<rect x="940" y="1444.2" width="4" height="1.6" fill="#8c8c8c"/>
<rect x="984" y="1430" width="1.8" height="3.6" fill="#8c8c8c"/>
<rect x="1028" y="1430" width="1.8" height="3.6" fill="#8c8c8c"/>
<rect x="1070" y="1430" width="1.8" height="3.6" fill="#8c8c8c"/>
<rect x="1114" y="1430" width="1.8" height="15.8" fill="#8c8c8c"/>
<rect x="1114" y="1444.2" width="4" height="1.6" fill="#8c8c8c"/>
<rect x="1158" y="1430" width="1.8" height="3.6" fill="#8c8c8c"/>
<rect x="1202" y="1430" width="1.8" height="3.6" fill="#8c8c8c"/>
<rect x="1246" y="1430" width="1.8" height="3.6" fill="#8c8c8c"/>
<rect x="1290" y="1430" width="1.8" height="15.8" fill="#8c8c8c"/>
<rect x="1290" y="1444.2" width="4" height="1.6" fill="#8c8c8c"/>
<rect x="1334" y="1430" width="1.8" height="3.6" fill="#8c8c8c"/>
<rect x="1376" y="1430" width="1.8" height="3.6" fill="#8c8c8c"/>
<rect x="1420" y="1430" width="1.8" height="3.6" fill="#8c8c8c"/>
<rect x="1464" y="1430" width="1.8" height="15.8" fill="#8c8c8c"/>
<rect x="1464" y="1444.2" width="4" height="1.6" fill="#8c8c8c"/>
<rect x="1508" y="1430" width="1.8" height="3.6" fill="#8c8c8c"/>
<rect x="1552" y="1430" width="1.8" height="3.6" fill="#8c8c8c"/>
<rect x="1596" y="1430" width="1.8" height="3.6" fill="#8c8c8c"/>
<rect x="1640" y="1430" width="1.8" height="15.8" fill="#8c8c8c"/>
<rect x="1640" y="1444.2" width="4" height="1.6" fill="#8c8c8c"/>
<rect x="1684" y="1430" width="1.8" height="3.6" fill="#8c8c8c"/>
<rect x="1726" y="1430" width="1.8" height="3.6" fill="#8c8c8c"/>
<rect x="1770" y="1430" width="1.8" height="3.6" fill="#8c8c8c"/>
<rect x="1814" y="1430" width="1.8" height="15.8" fill="#8c8c8c"/>
<rect x="1814" y="1444.2" width="4" height="1.6" fill="#8c8c8c"/>
<rect x="1858" y="1430" width="1.8" height="3.6" fill="#8c8c8c"/>
<rect x="1902" y="1430" width="1.8" height="3.6" fill="#8c8c8c"/>
<rect x="1946" y="1430" width="1.8" height="3.6" fill="#8c8c8c"/>
<rect x="1990" y="1430" width="1.8" height="15.8" fill="#8c8c8c"/>
<rect x="1990" y="1444.2" width="4" height="1.6" fill="#8c8c8c"/>
<rect x="2032" y="1430" width="1.8" height="3.6" fill="#8c8c8c"/>
<rect x="2076" y="1430" width="1.8" height="3.6" fill="#8c8c8c"/>
<rect x="2120" y="1430" width="1.8" height="3.6" fill="#8c8c8c"/>
<rect x="2164" y="1430" width="1.8" height="15.8" fill="#8c8c8c"/>
<rect x="2164" y="1444.2" width="4" height="1.6" fill="#8c8c8c"/>
<rect x="2208" y="1430" width="1.8" height="3.6" fill="#8c8c8c"/>
<rect x="2252" y="1430" width="1.8" height="3.6" fill="#8c8c8c"/>
<rect x="2296" y="1430" width="1.8" height="3.6" fill="#8c8c8c"/>
<rect x="2338" y="1430" width="1.8" height="15.8" fill="#8c8c8c"/>
<rect x="2338" y="1444.2" width="4" height="1.6" fill="#8c8c8c"/>
<rect x="2382" y="1430" width="1.8" height="3.6" fill="#8c8c8c"/>
<rect x="2418" y="102" width="196" height="68" fill="#7dfab2"/>
<circle cx="2435" cy="119" r="11.9" fill="none" stroke="#123524" stroke-width="1.8"/>
<rect x="2430" y="114.05" width="9.9" height="1.7" fill="#123524"/>
<rect x="2430" y="118.15" width="9.9" height="1.7" fill="#123524"/>
<rect x="2430" y="122.25" width="9.9" height="1.7" fill="#123524"/>
<rect x="2418" y="174" width="196" height="70" fill="#5a91e2"/>
<circle cx="2435" cy="191" r="11.9" fill="none" stroke="#b9b7b6" stroke-width="1.8"/>
<path d="M2428.4 188.3L2441.6 188.3L2435 197.3Z" fill="#b9b7b6"/>
<rect x="2418" y="248" width="196" height="68" fill="#6182e1"/>
<circle cx="2435" cy="265" r="11.9" fill="none" stroke="#141f45" stroke-width="1.8"/>
<rect x="2430" y="260.05" width="9.9" height="1.7" fill="#141f45"/>
<rect x="2430" y="264.15" width="9.9" height="1.7" fill="#141f45"/>
<rect x="2430" y="268.25" width="9.9" height="1.7" fill="#141f45"/>
<rect x="2418" y="320" width="196" height="68" fill="#ccfa52"/>
<circle cx="2435" cy="337" r="11.9" fill="none" stroke="#2c3a10" stroke-width="1.8"/>
<rect x="2430" y="332.05" width="9.9" height="1.7" fill="#2c3a10"/>
<rect x="2430" y="336.15" width="9.9" height="1.7" fill="#2c3a10"/>
<rect x="2430" y="340.25" width="9.9" height="1.7" fill="#2c3a10"/>
<rect x="2418" y="392" width="196" height="104" fill="#e5dee1"/>
<rect x="2418" y="392" width="8" height="846" fill="#e5dee1"/>
<circle cx="2435" cy="409" r="11.9" fill="none" stroke="#2a2a2a" stroke-width="1.8"/>
<rect x="2427.5" y="404.1" width="9.5" height="1.7" fill="#2a2a2a"/>
<rect x="2431.5" y="408.15" width="9.5" height="1.7" fill="#2a2a2a"/>
<rect x="2431.5" y="412.2" width="9.5" height="1.7" fill="#2a2a2a"/>
<rect x="2426" y="498" width="188" height="72" fill="#222222"/>
<rect x="2428" y="500" width="186" height="70" fill="#5a91e2"/>
<circle cx="2445" cy="517.1" r="11.9" fill="none" stroke="#b9b7b6" stroke-width="1.8"/>
<path d="M2438.4 514.4L2451.6 514.4L2445 523.4Z" fill="#b9b7b6"/>
<rect x="2426" y="572" width="188" height="72" fill="#222222"/>
<rect x="2428" y="574" width="186" height="70" fill="#5a91e2"/>
<circle cx="2445" cy="591.1" r="11.9" fill="none" stroke="#b9b7b6" stroke-width="1.8"/>
<path d="M2438.4 588.4L2451.6 588.4L2445 597.4Z" fill="#b9b7b6"/>
<rect x="2426" y="646" width="188" height="36" fill="#222222"/>
<rect x="2428" y="648" width="186" height="34" fill="#5a91e2"/>
<circle cx="2445" cy="665.1" r="11.9" fill="none" stroke="#b9b7b6" stroke-width="1.8"/>
<path d="M2441.6 658.7L2441.6 671.5L2451 665.1Z" fill="#b9b7b6"/>
<rect x="2426" y="684" width="188" height="36" fill="#222222"/>
<rect x="2428" y="686" width="186" height="34" fill="#5a91e2"/>
<circle cx="2445" cy="703.1" r="11.9" fill="none" stroke="#b9b7b6" stroke-width="1.8"/>
<path d="M2441.6 696.7L2441.6 709.5L2451 703.1Z" fill="#b9b7b6"/>
<rect x="2426" y="722" width="188" height="72" fill="#222222"/>
<rect x="2428" y="724" width="186" height="70" fill="#5a91e2"/>
<circle cx="2445" cy="741.1" r="11.9" fill="none" stroke="#b9b7b6" stroke-width="1.8"/>
<path d="M2438.4 738.4L2451.6 738.4L2445 747.4Z" fill="#b9b7b6"/>
<rect x="2426" y="796" width="188" height="72" fill="#222222"/>
<rect x="2428" y="798" width="186" height="70" fill="#5a91e2"/>
<circle cx="2445" cy="815.1" r="11.9" fill="none" stroke="#b9b7b6" stroke-width="1.8"/>
<path d="M2438.4 812.4L2451.6 812.4L2445 821.4Z" fill="#b9b7b6"/>
<rect x="2426" y="870" width="188" height="72" fill="#222222"/>
<rect x="2428" y="872" width="186" height="70" fill="#5a91e2"/>
<circle cx="2445" cy="889.1" r="11.9" fill="none" stroke="#b9b7b6" stroke-width="1.8"/>
<path d="M2438.4 886.4L2451.6 886.4L2445 895.4Z" fill="#b9b7b6"/>
<rect x="2426" y="944" width="188" height="72" fill="#222222"/>
<rect x="2428" y="946" width="186" height="70" fill="#5a91e2"/>
<circle cx="2445" cy="963.1" r="11.9" fill="none" stroke="#b9b7b6" stroke-width="1.8"/>
<path d="M2438.4 960.4L2451.6 960.4L2445 969.4Z" fill="#b9b7b6"/>
<rect x="2426" y="1018" width="188" height="72" fill="#222222"/>
<rect x="2428" y="1020" width="186" height="70" fill="#5a91e2"/>
<circle cx="2445" cy="1037.1" r="11.9" fill="none" stroke="#b9b7b6" stroke-width="1.8"/>
<path d="M2438.4 1034.4L2451.6 1034.4L2445 1043.4Z" fill="#b9b7b6"/>
<rect x="2426" y="1092" width="188" height="72" fill="#222222"/>
<rect x="2428" y="1094" width="186" height="70" fill="#5a91e2"/>
<circle cx="2445" cy="1111.1" r="11.9" fill="none" stroke="#b9b7b6" stroke-width="1.8"/>
<path d="M2438.4 1108.4L2451.6 1108.4L2445 1117.4Z" fill="#b9b7b6"/>
<rect x="2426" y="1166" width="188" height="72" fill="#222222"/>
<rect x="2428" y="1168" width="186" height="70" fill="#5a91e2"/>
<circle cx="2445" cy="1185.1" r="11.9" fill="none" stroke="#b9b7b6" stroke-width="1.8"/>
<path d="M2438.4 1182.4L2451.6 1182.4L2445 1191.4Z" fill="#b9b7b6"/>
<rect x="2418" y="1242" width="196" height="104" fill="#ffffff"/>
<rect x="2418" y="1242" width="8" height="144" fill="#ffffff"/>
<circle cx="2435" cy="1259" r="11.9" fill="none" stroke="#2a2a2a" stroke-width="1.8"/>
<rect x="2427.5" y="1254.1" width="9.5" height="1.7" fill="#2a2a2a"/>
<rect x="2431.5" y="1258.15" width="9.5" height="1.7" fill="#2a2a2a"/>
<rect x="2431.5" y="1262.2" width="9.5" height="1.7" fill="#2a2a2a"/>
<rect x="2426" y="1348" width="188" height="38" fill="#222222"/>
<rect x="2428" y="1350" width="186" height="36" fill="#5a91e2"/>
<circle cx="2445" cy="1367.1" r="11.9" fill="none" stroke="#b9b7b6" stroke-width="1.8"/>
<path d="M2438.4 1364.4L2451.6 1364.4L2445 1373.4Z" fill="#b9b7b6"/>
<rect x="2418" y="1392" width="196" height="34" fill="#ea4fcc"/>
<circle cx="2435" cy="1408.6" r="11.9" fill="none" stroke="#3c1135" stroke-width="1.8"/>
<path d="M2431.4 1402.4L2431.4 1414.8L2441.2 1408.6Z" fill="#3c1135"/>
<rect x="2424.8" y="28.9" width="56.4" height="24.2" rx="12.1" fill="#1e1e1e" stroke="#181818" stroke-width="1.5"/>
<rect x="2504.8" y="28.8" width="44.4" height="24.3" fill="#1e1e1e" stroke="#181818" stroke-width="1.6"/>
<path d="M2523.2 44.8L2530.8 37.5" stroke="#bdbdbd" stroke-width="1.8"/><circle cx="2523.2" cy="44.8" r="3.3" fill="#bdbdbd"/><circle cx="2530.8" cy="37.5" r="3.3" fill="#bdbdbd"/>
<rect x="2558.9" y="29" width="44.2" height="23.9" fill="#de7350" stroke="#1a1a1a" stroke-width="1.9"/>
<rect x="2574" y="40.4" width="14.1" height="7.5" fill="#050505"/><path d="M2577.2 41v-2.4a3.8 3.9 0 0 1 7.6 0V41" fill="none" stroke="#050505" stroke-width="2"/>
<circle cx="2437" cy="77.1" r="12.4" fill="#1e1e1e" stroke="#181818" stroke-width="1.4"/>
<path d="M2430 77.1L2438.2 71L2438.2 83.2Z" fill="#858585"/>
<rect x="2438.2" y="76.2" width="5.8" height="1.8" fill="#858585"/>
<circle cx="2469" cy="77.1" r="12.4" fill="#1e1e1e" stroke="#181818" stroke-width="1.4"/>
<path d="M2475.8 77.1L2467.8 71L2467.8 83.2Z" fill="#c4c4c4"/>
<rect x="2462" y="76.2" width="5.8" height="1.8" fill="#c4c4c4"/>
<rect x="2419.1" y="1439" width="27.7" height="23.9" fill="#f6b867" stroke="#1c1c1c" stroke-width="1.8"/>
<rect x="2424.05" y="1448.1" width="1.85" height="5.7" fill="#0a0a0a"/>
<rect x="2428.1" y="1444.2" width="1.85" height="13.5" fill="#0a0a0a"/>
<rect x="2432.06" y="1442.2" width="1.85" height="17.5" fill="#0a0a0a"/>
<rect x="2436.1" y="1446.1" width="1.85" height="9.8" fill="#0a0a0a"/>
<rect x="2440.2" y="1448.1" width="1.85" height="5.7" fill="#0a0a0a"/>
<rect x="2454.8" y="1439.3" width="68.6" height="23.6" fill="#1e1e1e" stroke="#181818" stroke-width="1.6"/>
<rect x="2456" y="1440" width="20.2" height="21.9" fill="#327486"/>
<rect x="2546.8" y="1439.3" width="28.6" height="23.6" fill="#1e1e1e" stroke="#181818" stroke-width="1.6"/>
<rect x="2582.6" y="1439.3" width="28.8" height="23.6" fill="#1e1e1e" stroke="#181818" stroke-width="1.6"/>
</svg>
<div id="txt">
<div class="fx" style="left:415.6px;top:1352px;width:196.4px">SOBV5_FX_RISER_HUNGRY</div>
<div class="fx" style="left:875.6px;top:1352px;width:64.4px">SOBV5_FX_RISER</div>
<div class="fx" style="left:1203.6px;top:1352px;width:260.4px">SOBV5_FX_RISER_HUNGRY</div>
<div class="fx" style="left:1793.6px;top:1352px;width:64.4px">SOBV5_FX_RISER</div>
<div class="rl" style="left:32px;top:32.8px">9</div>
<div class="rl" style="left:162px;top:32.8px">17</div>
<div class="rl" style="left:294px;top:32.8px">25</div>
<div class="rl" style="left:424px;top:32.8px">33</div>
<div class="rl" style="left:556px;top:32.8px">41</div>
<div class="rl" style="left:688px;top:32.8px">49</div>
<div class="rl" style="left:818px;top:32.8px">57</div>
<div class="rl" style="left:950px;top:32.8px">65</div>
<div class="rl" style="left:1080px;top:32.8px">73</div>
<div class="rl" style="left:1212px;top:32.8px">81</div>
<div class="rl" style="left:1344px;top:32.8px">89</div>
<div class="rl" style="left:1474px;top:32.8px">97</div>
<div class="rl" style="left:1606px;top:32.8px">105</div>
<div class="rl" style="left:1736px;top:32.8px">113</div>
<div class="rl" style="left:1868px;top:32.8px">121</div>
<div class="rl" style="left:2000px;top:32.8px">129</div>
<div class="rl" style="left:2130px;top:32.8px">137</div>
<div class="rl" style="left:2262px;top:32.8px">145</div>
<div class="rl" style="left:70.2px;top:1435.2px">0:20</div>
<div class="rl" style="left:246.2px;top:1435.2px">0:40</div>
<div class="rl" style="left:420.2px;top:1435.2px">1:00</div>
<div class="rl" style="left:596.2px;top:1435.2px">1:20</div>
<div class="rl" style="left:770.2px;top:1435.2px">1:40</div>
<div class="rl" style="left:946.2px;top:1435.2px">2:00</div>
<div class="rl" style="left:1120.2px;top:1435.2px">2:20</div>
<div class="rl" style="left:1296.2px;top:1435.2px">2:40</div>
<div class="rl" style="left:1470.2px;top:1435.2px">3:00</div>
<div class="rl" style="left:1646.2px;top:1435.2px">3:20</div>
<div class="rl" style="left:1820.2px;top:1435.2px">3:40</div>
<div class="rl" style="left:1996.2px;top:1435.2px">4:00</div>
<div class="rl" style="left:2170.2px;top:1435.2px">4:20</div>
<div class="rl" style="left:2344.2px;top:1435.2px">4:40</div>
<div class="th" style="left:2455.3px;top:108.9px;color:#123524">1 Group</div>
<div class="th k" style="left:2457px;top:180.9px;color:#b9b7b6">KICK BUILD</div>
<div class="th" style="left:2455.3px;top:254.9px;color:#141f45">8 Group</div>
<div class="th" style="left:2455.3px;top:326.9px;color:#2c3a10">16 Group</div>
<div class="th" style="left:2455.3px;top:398.9px;color:#2a2a2a">19 Group</div>
<div class="th g" style="left:2463.7px;top:506.8px;color:#b9b7b6">SYNTH 1</div>
<div class="th g" style="left:2463.7px;top:580.8px;color:#b9b7b6">SYNTH 2</div>
<div class="th g" style="left:2463.7px;top:654.8px;color:#b9b7b6">SYNTH 3</div>
<div class="th g" style="left:2463.7px;top:692.8px;color:#b9b7b6">SYNTH 4</div>
<div class="th g" style="left:2463.7px;top:730.8px;color:#b9b7b6">SYNTH 5</div>
<div class="th g" style="left:2463.7px;top:804.8px;color:#b9b7b6">SYNTH 6</div>
<div class="th g" style="left:2463.7px;top:878.8px;color:#b9b7b6">SYNTH 7</div>
<div class="th g" style="left:2463.7px;top:952.8px;color:#b9b7b6">SYNTH 8</div>
<div class="th g" style="left:2463.7px;top:1026.8px;color:#b9b7b6">SYNTH 9</div>
<div class="th g" style="left:2463.7px;top:1100.8px;color:#b9b7b6">PAD 1</div>
<div class="th g" style="left:2463.7px;top:1174.8px;color:#b9b7b6">PAD 2</div>
<div class="th" style="left:2455.3px;top:1248.9px;color:#2a2a2a">31 Group</div>
<div class="th g" style="left:2463.7px;top:1356.8px;color:#b9b7b6">FX 1</div>
<div class="th" style="left:2459.5px;top:1398.9px;color:#3c1135">Main</div>
<div class="set" style="left:2424px;top:28.1px;width:58px">Set</div>
<div class="bt" style="left:2455px;top:1440.5px;width:68px;text-align:left;padding-left:7.3px;font-size:20.5px">1.00x</div>
<div class="bt" style="left:2546px;top:1440.6px;width:30px">H</div>
<div class="bt" style="left:2582px;top:1440.6px;width:30px">W</div>
<div class="zoom" style="left:2353.9px;top:1388.2px">2<span style="margin:0 3.6px 0 2.6px;font-size:36.5px;position:relative;top:1.4px">/</span>1</div><div style="position:absolute;left:2398.4px;top:1392px;width:2px;height:34px;background:#999999"></div>
</div></body></html>
